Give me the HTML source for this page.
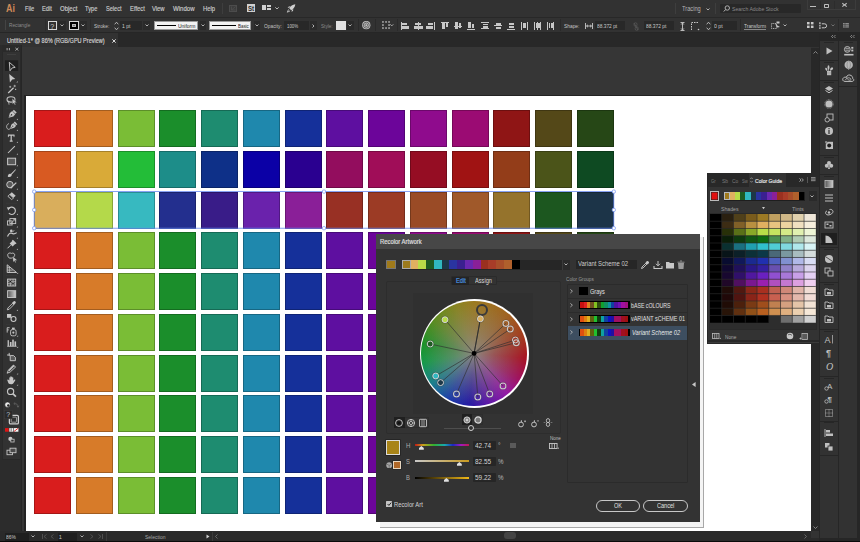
<!DOCTYPE html><html><head><meta charset="utf-8"><style>
html,body{margin:0;padding:0;}
body{width:860px;height:542px;overflow:hidden;position:relative;background:#323232;font-family:"Liberation Sans", sans-serif;}
.a{position:absolute;}
.t{white-space:nowrap;}
svg{overflow:visible;}
</style></head><body><div class="a" style="left:0px;top:0px;width:860px;height:17px;background:#323232;"></div><div class="a t" style="left:5.80px;top:2.76px;font-size:10.8px;line-height:10.8px;color:#d08a58;transform:scaleX(0.8241);transform-origin:0 0;font-weight:bold;">Ai</div><div class="a t" style="left:24.70px;top:6.20px;font-size:6.5px;line-height:6.5px;color:#cccccc;transform:scaleX(0.8696);transform-origin:0 0;-webkit-text-stroke:0.15px #cccccc;">File</div><div class="a t" style="left:41.70px;top:6.20px;font-size:6.5px;line-height:6.5px;color:#cccccc;transform:scaleX(0.8829);transform-origin:0 0;-webkit-text-stroke:0.15px #cccccc;">Edit</div><div class="a t" style="left:59.60px;top:6.20px;font-size:6.5px;line-height:6.5px;color:#cccccc;transform:scaleX(0.9263);transform-origin:0 0;-webkit-text-stroke:0.15px #cccccc;">Object</div><div class="a t" style="left:84.90px;top:6.20px;font-size:6.5px;line-height:6.5px;color:#cccccc;transform:scaleX(0.8720);transform-origin:0 0;-webkit-text-stroke:0.15px #cccccc;">Type</div><div class="a t" style="left:105.60px;top:6.20px;font-size:6.5px;line-height:6.5px;color:#cccccc;transform:scaleX(0.8633);transform-origin:0 0;-webkit-text-stroke:0.15px #cccccc;">Select</div><div class="a t" style="left:129.60px;top:6.20px;font-size:6.5px;line-height:6.5px;color:#cccccc;transform:scaleX(0.8964);transform-origin:0 0;-webkit-text-stroke:0.15px #cccccc;">Effect</div><div class="a t" style="left:152.30px;top:6.20px;font-size:6.5px;line-height:6.5px;color:#cccccc;transform:scaleX(0.9016);transform-origin:0 0;-webkit-text-stroke:0.15px #cccccc;">View</div><div class="a t" style="left:173.30px;top:6.20px;font-size:6.5px;line-height:6.5px;color:#cccccc;transform:scaleX(0.9334);transform-origin:0 0;-webkit-text-stroke:0.15px #cccccc;">Window</div><div class="a t" style="left:203.00px;top:6.20px;font-size:6.5px;line-height:6.5px;color:#cccccc;transform:scaleX(0.9059);transform-origin:0 0;-webkit-text-stroke:0.15px #cccccc;">Help</div><div class="a" style="left:222px;top:3px;width:1px;height:11px;background:#3e3e3e;"></div><div class="a" style="left:229.3px;top:4.7px;width:7.9px;height:7.4px;background:#3c3c3c;border:0.8px solid #4c4c4c;box-sizing:border-box;"></div><svg class="a" style="left:230.8px;top:6.2px;" width="5" height="4.5" viewBox="0 0 5 4.5"><path d="M0.5 4 L4.5 0.5 M0.5 0.5 V4 H4.5" stroke="#555" fill="none" stroke-width="0.6"/></svg><div class="a" style="left:247px;top:4.2px;width:7.9px;height:7.9px;background:#d0d0d0;"></div><div class="a t" style="left:247.90px;top:6.08px;font-size:6.4px;line-height:6.4px;color:#2a2a2a;transform:scaleX(0.9531);transform-origin:0 0;font-weight:bold;">St</div><div class="a" style="left:262.3px;top:5.1px;width:3.7px;height:5.1px;background:#d0d0d0;"></div><div class="a" style="left:267px;top:5.1px;width:4.2px;height:2.2px;background:#d0d0d0;"></div><div class="a" style="left:267px;top:8px;width:4.2px;height:2.2px;background:#d0d0d0;"></div><svg class="a" style="left:275px;top:6.5px;" width="4" height="2.5" viewBox="0 0 4 2.5"><path d="M0.3 0.3 L2 2 L3.7 0.3" stroke="#c8c8c8" fill="none" stroke-width="0.9"/></svg><svg class="a" style="left:287px;top:3.7px;" width="8.5" height="8.5" viewBox="0 0 8.5 8.5"><path d="M8.3 0.2 C5.5 0.5 3.6 2 2.2 4.3 L4.2 6.3 C6.5 4.9 8 3 8.3 0.2 Z" fill="#cfcfcf"/><path d="M2.6 3.6 L0.6 3.9 L1.8 2.4 L3.6 2.3 Z M4.9 5.9 L4.6 7.9 L6.1 6.7 L6.2 4.9 Z" fill="#cfcfcf"/><path d="M1.6 5.4 L0.3 8.2 L3.1 6.9" stroke="#cfcfcf" fill="none" stroke-width="0.8"/></svg><div class="a" style="left:675px;top:3px;width:1px;height:11px;background:#3e3e3e;"></div><div class="a t" style="left:681.50px;top:5.97px;font-size:6.3px;line-height:6.3px;color:#b4b4b4;transform:scaleX(0.9043);transform-origin:0 0;">Tracing</div><svg class="a" style="left:705.5px;top:7.5px;" width="4" height="3" viewBox="0 0 4 3"><path d="M0.5 0.5 L2 2 L3.5 0.5" stroke="#c0c0c0" fill="none" stroke-width="0.9"/></svg><div class="a" style="left:715.3px;top:3px;width:1px;height:11px;background:#3e3e3e;"></div><div class="a" style="left:720px;top:4px;width:81.4px;height:9px;background:#282828;border-radius:1px;"></div><svg class="a" style="left:723px;top:5px;" width="8" height="7" viewBox="0 0 8 7"><circle cx="4.3" cy="3" r="2.2" stroke="#bbb" fill="none" stroke-width="0.9"/><path d="M2.6 4.6 L0.8 6.5" stroke="#bbb" stroke-width="1"/></svg><div class="a t" style="left:732.30px;top:6.14px;font-size:6.1px;line-height:6.1px;color:#8a8a8a;transform:scaleX(0.8427);transform-origin:0 0;">Search Adobe Stock</div><div class="a" style="left:807px;top:0px;width:48.6px;height:9.5px;border:1px solid #3c3c3c;border-top:none;box-sizing:border-box;"></div><div class="a" style="left:810.2px;top:5.9px;width:5.4px;height:1.5px;background:#bdbdbd;"></div><div class="a" style="left:819.6px;top:0.5px;width:0.7px;height:8.5px;background:#2c2c2c;"></div><div class="a" style="left:833.6px;top:0.5px;width:0.7px;height:8.5px;background:#2c2c2c;"></div><div class="a" style="left:824px;top:3.5px;width:5.2px;height:4.4px;border:1.3px solid #bdbdbd;border-radius:0.8px;box-sizing:border-box;"></div><svg class="a" style="left:842px;top:3.3px;" width="5" height="3.8" viewBox="0 0 5 3.8"><path d="M0.3 0.2 L4.7 3.6 M4.7 0.2 L0.3 3.6" stroke="#bdbdbd" stroke-width="1.1"/></svg><div class="a" style="left:0px;top:16.6px;width:860px;height:16.6px;background:#323232;border-top:1px solid #282828;border-bottom:1px solid #262626;box-sizing:border-box;"></div><div class="a" style="left:5px;top:20px;width:0.8px;height:10px;background:#444;"></div><div class="a t" style="left:8.70px;top:22.24px;font-size:6.1px;line-height:6.1px;color:#8c8c8c;transform:scaleX(0.7751);transform-origin:0 0;">Rectangle</div><div class="a" style="left:45px;top:19px;width:1px;height:12px;background:#2c2c2c;"></div><div class="a" style="left:48px;top:20.5px;width:9.2px;height:9.5px;background:#323232;border:1px solid #d8d8d8;box-sizing:border-box;"></div><div class="a t" style="left:50.20px;top:23.07px;font-size:7px;line-height:7px;color:#d8d8d8;">?</div><div class="a" style="left:58.2px;top:20.5px;width:7.7px;height:9.5px;background:#2a2a2a;"></div><svg class="a" style="left:60.2px;top:24px;" width="4" height="3" viewBox="0 0 4 3"><path d="M0.5 0.5 L2 2 L3.5 0.5" stroke="#c0c0c0" fill="none" stroke-width="0.9"/></svg><div class="a" style="left:69px;top:20.5px;width:9.7px;height:9.5px;background:#000;border:1px solid #d8d8d8;box-sizing:border-box;"></div><div class="a" style="left:72.2px;top:23.5px;width:3.4px;height:3.4px;background:#777;border:0.6px solid #bbb;box-sizing:border-box;"></div><div class="a" style="left:79.5px;top:20.5px;width:7.5px;height:9.5px;background:#2a2a2a;"></div><svg class="a" style="left:81.2px;top:24px;" width="4" height="3" viewBox="0 0 4 3"><path d="M0.5 0.5 L2 2 L3.5 0.5" stroke="#c0c0c0" fill="none" stroke-width="0.9"/></svg><div class="a" style="left:89.5px;top:19px;width:1px;height:12px;background:#2c2c2c;"></div><div class="a t" style="left:93.60px;top:22.64px;font-size:6.1px;line-height:6.1px;color:#c4c4c4;transform:scaleX(0.7912);transform-origin:0 0;">Stroke:</div><svg class="a" style="left:113.5px;top:20.5px;" width="5" height="10" viewBox="0 0 5 10"><path d="M0.7 3.3 L2.5 1.2 L4.3 3.3 M0.7 6.7 L2.5 8.8 L4.3 6.7" stroke="#c0c0c0" fill="none" stroke-width="0.9"/></svg><div class="a" style="left:119.8px;top:21px;width:22px;height:9px;background:#282828;"></div><div class="a t" style="left:122.20px;top:22.64px;font-size:6.1px;line-height:6.1px;color:#c8c8c8;transform:scaleX(0.8246);transform-origin:0 0;">1 pt</div><div class="a" style="left:143px;top:21px;width:7px;height:9px;background:#2a2a2a;"></div><svg class="a" style="left:144.5px;top:24px;" width="4" height="3" viewBox="0 0 4 3"><path d="M0.5 0.5 L2 2 L3.5 0.5" stroke="#c0c0c0" fill="none" stroke-width="0.9"/></svg><div class="a" style="left:154px;top:20.5px;width:43.7px;height:9.3px;background:#f2f2f2;border:0.8px solid #999;box-sizing:border-box;"></div><div class="a" style="left:157px;top:24.8px;width:19px;height:1.3px;background:#000;"></div><div class="a t" style="left:178.00px;top:22.92px;font-size:6px;line-height:6px;color:#222;transform:scaleX(0.8286);transform-origin:0 0;">Uniform</div><div class="a" style="left:199.5px;top:21px;width:6.5px;height:9px;background:#2a2a2a;"></div><svg class="a" style="left:200.8px;top:24px;" width="4" height="3" viewBox="0 0 4 3"><path d="M0.5 0.5 L2 2 L3.5 0.5" stroke="#c0c0c0" fill="none" stroke-width="0.9"/></svg><div class="a" style="left:209.3px;top:20.5px;width:41.7px;height:9.3px;background:#f2f2f2;border:0.8px solid #999;box-sizing:border-box;"></div><div class="a" style="left:211.6px;top:24.8px;width:24.6px;height:1.3px;background:#000;"></div><div class="a t" style="left:238.20px;top:22.92px;font-size:6px;line-height:6px;color:#222;transform:scaleX(0.7362);transform-origin:0 0;">Basic</div><div class="a" style="left:253.5px;top:21px;width:6.5px;height:9px;background:#2a2a2a;"></div><svg class="a" style="left:254.8px;top:24px;" width="4" height="3" viewBox="0 0 4 3"><path d="M0.5 0.5 L2 2 L3.5 0.5" stroke="#c0c0c0" fill="none" stroke-width="0.9"/></svg><div class="a t" style="left:263.90px;top:22.64px;font-size:6.1px;line-height:6.1px;color:#c4c4c4;transform:scaleX(0.7951);transform-origin:0 0;">Opacity:</div><div class="a" style="left:284.4px;top:21px;width:24.4px;height:9px;background:#282828;"></div><div class="a t" style="left:286.60px;top:22.64px;font-size:6.1px;line-height:6.1px;color:#c8c8c8;transform:scaleX(0.7172);transform-origin:0 0;">100%</div><div class="a" style="left:310px;top:21px;width:7px;height:9px;background:#2a2a2a;"></div><svg class="a" style="left:312.3px;top:23.5px;" width="3" height="4" viewBox="0 0 3 4"><path d="M0.5 0.5 L2 2 L0.5 3.5" stroke="#c0c0c0" fill="none" stroke-width="0.9"/></svg><div class="a t" style="left:321.00px;top:22.64px;font-size:6.1px;line-height:6.1px;color:#8a8a8a;transform:scaleX(0.7607);transform-origin:0 0;">Style:</div><div class="a" style="left:335.6px;top:21px;width:10px;height:9.3px;background:#e2e2e2;"></div><div class="a" style="left:347px;top:21px;width:6.5px;height:9px;background:#2a2a2a;"></div><svg class="a" style="left:348.3px;top:24px;" width="4" height="3" viewBox="0 0 4 3"><path d="M0.5 0.5 L2 2 L3.5 0.5" stroke="#c0c0c0" fill="none" stroke-width="0.9"/></svg><div class="a" style="left:357.7px;top:19px;width:1px;height:12px;background:#2a2a2a;"></div><svg class="a" style="left:362.2px;top:20.8px;" width="8.6" height="8.4" viewBox="0 0 8.6 8.4"><circle cx="4.3" cy="4.2" r="4.1" fill="#c4c4c4"/><circle cx="4.3" cy="4.2" r="3" stroke="#4a4a4a" fill="none" stroke-width="0.8"/><circle cx="4.3" cy="4.2" r="1.4" stroke="#4a4a4a" fill="none" stroke-width="0.7"/></svg><div class="a" style="left:375px;top:19px;width:1px;height:12px;background:#2a2a2a;"></div><svg class="a" style="left:381.5px;top:20.8px;" width="8" height="8" viewBox="0 0 8 8"><rect x="0.2" y="0.2" width="1.5" height="1.5" fill="#c0c0c0"/><rect x="0.2" y="3.3" width="1.5" height="1.5" fill="#c0c0c0"/><rect x="0.2" y="6.3" width="1.5" height="1.5" fill="#c0c0c0"/><rect x="3.3" y="0.2" width="1.5" height="1.5" fill="#c0c0c0"/><rect x="3.3" y="6.3" width="1.5" height="1.5" fill="#c0c0c0"/><rect x="6.3" y="0.2" width="1.5" height="1.5" fill="#c0c0c0"/><rect x="6.3" y="3.3" width="1.5" height="1.5" fill="#c0c0c0"/><rect x="6.3" y="6.3" width="1.5" height="1.5" fill="#c0c0c0"/></svg><svg class="a" style="left:390.3px;top:24.2px;" width="3.6" height="2.6" viewBox="0 0 3.6 2.6"><path d="M0.3 0.3 L1.8 1.9 L3.3 0.3" stroke="#c0c0c0" fill="none" stroke-width="0.8"/></svg><div class="a" style="left:397px;top:19px;width:1px;height:12px;background:#2a2a2a;"></div><div class="a" style="left:400.7px;top:21.5px;width:1px;height:8px;background:#c8c8c8;"></div><div class="a" style="left:402.2px;top:22.5px;width:5px;height:2.5px;background:#c8c8c8;"></div><div class="a" style="left:402.2px;top:26px;width:7px;height:2.5px;background:#c8c8c8;"></div><div class="a" style="left:417.5px;top:21.5px;width:1px;height:8px;background:#c8c8c8;"></div><div class="a" style="left:415.0px;top:22.5px;width:6px;height:2.5px;background:#c8c8c8;"></div><div class="a" style="left:413.5px;top:26px;width:9px;height:2.5px;background:#c8c8c8;"></div><div class="a" style="left:434px;top:21.5px;width:1px;height:8px;background:#c8c8c8;"></div><div class="a" style="left:428px;top:22.5px;width:5px;height:2.5px;background:#c8c8c8;"></div><div class="a" style="left:426px;top:26px;width:7px;height:2.5px;background:#c8c8c8;"></div><div class="a" style="left:441.4px;top:21.5px;width:8px;height:1px;background:#c8c8c8;"></div><div class="a" style="left:442.4px;top:23px;width:2.5px;height:6px;background:#c8c8c8;"></div><div class="a" style="left:445.9px;top:23px;width:2.5px;height:4px;background:#c8c8c8;"></div><div class="a" style="left:454px;top:25.5px;width:8px;height:1px;background:#c8c8c8;"></div><div class="a" style="left:455px;top:22px;width:2.5px;height:7px;background:#c8c8c8;"></div><div class="a" style="left:458.5px;top:23px;width:2.5px;height:5px;background:#c8c8c8;"></div><div class="a" style="left:467px;top:28.5px;width:8px;height:1px;background:#c8c8c8;"></div><div class="a" style="left:468px;top:22px;width:2.5px;height:6px;background:#c8c8c8;"></div><div class="a" style="left:471.5px;top:24px;width:2.5px;height:4px;background:#c8c8c8;"></div><div class="a" style="left:481px;top:22px;width:8px;height:1px;background:#c8c8c8;"></div><div class="a" style="left:481px;top:28px;width:8px;height:1px;background:#c8c8c8;"></div><div class="a" style="left:482.5px;top:23.5px;width:5px;height:1.5px;background:#c8c8c8;"></div><div class="a" style="left:482.5px;top:26px;width:5px;height:1.5px;background:#c8c8c8;"></div><div class="a" style="left:494px;top:25px;width:8px;height:1px;background:#c8c8c8;"></div><div class="a" style="left:495.5px;top:22.5px;width:5px;height:2px;background:#c8c8c8;"></div><div class="a" style="left:495.5px;top:26.5px;width:5px;height:2px;background:#c8c8c8;"></div><div class="a" style="left:507px;top:28.5px;width:8px;height:1px;background:#c8c8c8;"></div><div class="a" style="left:508.5px;top:22.5px;width:5px;height:2px;background:#c8c8c8;"></div><div class="a" style="left:508.5px;top:25.5px;width:5px;height:2px;background:#c8c8c8;"></div><div class="a" style="left:521px;top:21.5px;width:1px;height:8px;background:#c8c8c8;"></div><div class="a" style="left:527px;top:21.5px;width:1px;height:8px;background:#c8c8c8;"></div><div class="a" style="left:522.5px;top:23px;width:2px;height:5px;background:#c8c8c8;"></div><div class="a" style="left:524.8px;top:23px;width:1.5px;height:5px;background:#c8c8c8;"></div><div class="a" style="left:537px;top:21.5px;width:1px;height:8px;background:#c8c8c8;"></div><div class="a" style="left:534px;top:21.5px;width:1px;height:8px;background:#c8c8c8;"></div><div class="a" style="left:540px;top:21.5px;width:1px;height:8px;background:#c8c8c8;"></div><div class="a" style="left:535.5px;top:23px;width:1.5px;height:5px;background:#c8c8c8;"></div><div class="a" style="left:538px;top:23px;width:1.5px;height:5px;background:#c8c8c8;"></div><div class="a" style="left:547px;top:21.5px;width:1px;height:8px;background:#c8c8c8;"></div><div class="a" style="left:553px;top:21.5px;width:1px;height:8px;background:#c8c8c8;"></div><div class="a" style="left:548.5px;top:23px;width:1.5px;height:5px;background:#c8c8c8;"></div><div class="a" style="left:550.5px;top:23px;width:2px;height:5px;background:#c8c8c8;"></div><div class="a" style="left:560px;top:19px;width:1px;height:12px;background:#2a2a2a;"></div><div class="a t" style="left:564.00px;top:22.64px;font-size:6.1px;line-height:6.1px;color:#c4c4c4;transform:scaleX(0.7964);transform-origin:0 0;">Shape:</div><svg class="a" style="left:585px;top:22.5px;" width="8" height="6" viewBox="0 0 8 6"><path d="M0.5 0 V6 M7.5 0 V6 M1.5 3 H6.5 M1.5 3 L3 1.8 M1.5 3 L3 4.2 M6.5 3 L5 1.8 M6.5 3 L5 4.2" stroke="#c8c8c8" fill="none" stroke-width="0.9"/></svg><div class="a" style="left:595px;top:21px;width:29.6px;height:9px;background:#282828;"></div><div class="a t" style="left:596.90px;top:22.64px;font-size:6.1px;line-height:6.1px;color:#c8c8c8;transform:scaleX(0.7941);transform-origin:0 0;">88.372 pt</div><svg class="a" style="left:633px;top:21.5px;" width="6" height="9" viewBox="0 0 6 9"><path d="M1 1 L5 8" stroke="#555" stroke-width="1"/><rect x="1" y="0.8" width="3" height="3.5" rx="1.4" stroke="#555" fill="none" stroke-width="0.8"/><rect x="2.2" y="4.8" width="3" height="3.5" rx="1.4" stroke="#555" fill="none" stroke-width="0.8"/></svg><div class="a" style="left:643.8px;top:21px;width:30.7px;height:9px;background:#282828;"></div><div class="a t" style="left:645.70px;top:22.64px;font-size:6.1px;line-height:6.1px;color:#c8c8c8;transform:scaleX(0.7981);transform-origin:0 0;">88.372 pt</div><svg class="a" style="left:679.5px;top:21.5px;" width="5" height="9" viewBox="0 0 5 9"><path d="M0.5 0.5 H4.5 M0.5 8.5 H4.5 M2.5 1 V8 M1.2 2.5 L2.5 1 L3.8 2.5 M1.2 6.5 L2.5 8 L3.8 6.5" stroke="#c8c8c8" fill="none" stroke-width="0.9"/></svg><svg class="a" style="left:691px;top:21.5px;" width="9" height="9" viewBox="0 0 9 9"><path d="M0.5 8 V0.5 H7" stroke="#c8c8c8" fill="none" stroke-width="1" stroke-dasharray="1.5 1"/><circle cx="7.5" cy="7.5" r="0.8" fill="#c8c8c8"/></svg><svg class="a" style="left:705.5px;top:20.5px;" width="5" height="10" viewBox="0 0 5 10"><path d="M0.7 3.3 L2.5 1.2 L4.3 3.3 M0.7 6.7 L2.5 8.8 L4.3 6.7" stroke="#c0c0c0" fill="none" stroke-width="0.9"/></svg><div class="a" style="left:712.3px;top:21px;width:24.4px;height:9px;background:#282828;"></div><div class="a t" style="left:714.40px;top:22.64px;font-size:6.1px;line-height:6.1px;color:#c8c8c8;transform:scaleX(0.8442);transform-origin:0 0;">0 pt</div><div class="a" style="left:740px;top:19px;width:1px;height:12px;background:#2a2a2a;"></div><div class="a t" style="left:744.00px;top:22.64px;font-size:6.1px;line-height:6.1px;color:#c8c8c8;transform:scaleX(0.7979);transform-origin:0 0;">Transform</div><div class="a" style="left:744px;top:28.6px;width:22px;height:0.6px;background:#8a8a8a;"></div><svg class="a" style="left:770.5px;top:21px;" width="10" height="9" viewBox="0 0 10 9"><rect x="0.5" y="2.5" width="5" height="5" stroke="#c8c8c8" fill="none" stroke-width="0.9" stroke-dasharray="1 0.8"/><path d="M4 3 L9 6 L6.5 6.5 L8 9 L4 3Z" fill="#c8c8c8"/><rect x="5.5" y="0.5" width="3" height="2" fill="#c8c8c8"/></svg><svg class="a" style="left:782.7px;top:24px;" width="4" height="3" viewBox="0 0 4 3"><path d="M0.5 0.5 L2 2 L3.5 0.5" stroke="#c0c0c0" fill="none" stroke-width="0.9"/></svg><svg class="a" style="left:807px;top:22px;" width="7" height="6" viewBox="0 0 7 6"><rect x="0" y="0" width="2.6" height="2.4" fill="#c8c8c8"/><rect x="3.9" y="0" width="2.6" height="2.4" fill="#c8c8c8"/><rect x="0" y="3.6" width="2.6" height="2.4" fill="#c8c8c8"/><rect x="3.9" y="3.6" width="2.6" height="2.4" fill="#c8c8c8"/></svg><svg class="a" style="left:819px;top:21.5px;" width="9" height="8" viewBox="0 0 9 8"><path d="M0.9 0.3 V7.7" stroke="#c8c8c8" stroke-width="1.3" stroke-dasharray="1.6 0.9"/><path d="M2.8 1.8 H5.6 A2 2 0 0 1 5.6 5.8 H2.8" stroke="#c8c8c8" fill="none" stroke-width="1"/></svg><svg class="a" style="left:830.5px;top:24px;" width="4" height="3" viewBox="0 0 4 3"><path d="M0.5 0.5 L2 2 L3.5 0.5" stroke="#777" fill="none" stroke-width="0.9"/></svg><div class="a" style="left:838px;top:19px;width:1px;height:12px;background:#2a2a2a;"></div><svg class="a" style="left:843.1px;top:22.7px;" width="6" height="4.6" viewBox="0 0 6 4.6"><rect x="0" y="0" width="5.9" height="4.6" fill="#8e8e8e"/><path d="M0 1.5 H5.9 M0 3.1 H5.9 M2 0 V4.6" stroke="#323232" stroke-width="0.5"/></svg><div class="a" style="left:0px;top:33.2px;width:860px;height:14.1px;background:#282828;"></div><div class="a" style="left:0px;top:33.2px;width:118px;height:14.3px;background:#323232;"></div><div class="a t" style="left:6.70px;top:38.47px;font-size:6.3px;line-height:6.3px;color:#d4d4d4;transform:scaleX(0.8796);transform-origin:0 0;-webkit-text-stroke:0.15px #d4d4d4;">Untitled-1* @ 86% (RGB/GPU Preview)</div><svg class="a" style="left:111.5px;top:38.8px;" width="4" height="4" viewBox="0 0 4 4"><path d="M0.3 0.3 L3.7 3.7 M3.7 0.3 L0.3 3.7" stroke="#d8d8d8" stroke-width="1"/></svg><div class="a" style="left:22px;top:47.3px;width:789px;height:484.2px;background:#363636;"></div><div class="a" style="left:24px;top:94.5px;width:787px;height:437px;background:#232323;"></div><div class="a" style="left:26px;top:96px;width:785px;height:435.5px;background:#ffffff;"></div><div class="a" style="left:34.0px;top:110.0px;width:37px;height:37px;background:#d91d1d;box-sizing:border-box;border:1px solid rgba(0,0,0,0.24);"></div><div class="a" style="left:75.77px;top:110.0px;width:37px;height:37px;background:#d77b29;box-sizing:border-box;border:1px solid rgba(0,0,0,0.24);"></div><div class="a" style="left:117.54px;top:110.0px;width:37px;height:37px;background:#7abd36;box-sizing:border-box;border:1px solid rgba(0,0,0,0.24);"></div><div class="a" style="left:159.31px;top:110.0px;width:37px;height:37px;background:#1b8e2b;box-sizing:border-box;border:1px solid rgba(0,0,0,0.24);"></div><div class="a" style="left:201.08px;top:110.0px;width:37px;height:37px;background:#1e8c70;box-sizing:border-box;border:1px solid rgba(0,0,0,0.24);"></div><div class="a" style="left:242.85px;top:110.0px;width:37px;height:37px;background:#1f88ad;box-sizing:border-box;border:1px solid rgba(0,0,0,0.24);"></div><div class="a" style="left:284.62px;top:110.0px;width:37px;height:37px;background:#15309a;box-sizing:border-box;border:1px solid rgba(0,0,0,0.24);"></div><div class="a" style="left:326.39px;top:110.0px;width:37px;height:37px;background:#5e0fa0;box-sizing:border-box;border:1px solid rgba(0,0,0,0.24);"></div><div class="a" style="left:368.16px;top:110.0px;width:37px;height:37px;background:#6c059a;box-sizing:border-box;border:1px solid rgba(0,0,0,0.24);"></div><div class="a" style="left:409.93px;top:110.0px;width:37px;height:37px;background:#8f0b8d;box-sizing:border-box;border:1px solid rgba(0,0,0,0.24);"></div><div class="a" style="left:451.7px;top:110.0px;width:37px;height:37px;background:#9b0b73;box-sizing:border-box;border:1px solid rgba(0,0,0,0.24);"></div><div class="a" style="left:493.47px;top:110.0px;width:37px;height:37px;background:#8f1515;box-sizing:border-box;border:1px solid rgba(0,0,0,0.24);"></div><div class="a" style="left:535.24px;top:110.0px;width:37px;height:37px;background:#544818;box-sizing:border-box;border:1px solid rgba(0,0,0,0.24);"></div><div class="a" style="left:577.01px;top:110.0px;width:37px;height:37px;background:#264716;box-sizing:border-box;border:1px solid rgba(0,0,0,0.24);"></div><div class="a" style="left:34.0px;top:150.78px;width:37px;height:37px;background:#d85a22;box-sizing:border-box;border:1px solid rgba(0,0,0,0.24);"></div><div class="a" style="left:75.77px;top:150.78px;width:37px;height:37px;background:#d9aa38;box-sizing:border-box;border:1px solid rgba(0,0,0,0.24);"></div><div class="a" style="left:117.54px;top:150.78px;width:37px;height:37px;background:#23bd38;box-sizing:border-box;border:1px solid rgba(0,0,0,0.24);"></div><div class="a" style="left:159.31px;top:150.78px;width:37px;height:37px;background:#1d8d89;box-sizing:border-box;border:1px solid rgba(0,0,0,0.24);"></div><div class="a" style="left:201.08px;top:150.78px;width:37px;height:37px;background:#0e3088;box-sizing:border-box;border:1px solid rgba(0,0,0,0.24);"></div><div class="a" style="left:242.85px;top:150.78px;width:37px;height:37px;background:#0b00a6;box-sizing:border-box;border:1px solid rgba(0,0,0,0.24);"></div><div class="a" style="left:284.62px;top:150.78px;width:37px;height:37px;background:#2a0090;box-sizing:border-box;border:1px solid rgba(0,0,0,0.24);"></div><div class="a" style="left:326.39px;top:150.78px;width:37px;height:37px;background:#930d5e;box-sizing:border-box;border:1px solid rgba(0,0,0,0.24);"></div><div class="a" style="left:368.16px;top:150.78px;width:37px;height:37px;background:#a00d58;box-sizing:border-box;border:1px solid rgba(0,0,0,0.24);"></div><div class="a" style="left:409.93px;top:150.78px;width:37px;height:37px;background:#950d23;box-sizing:border-box;border:1px solid rgba(0,0,0,0.24);"></div><div class="a" style="left:451.7px;top:150.78px;width:37px;height:37px;background:#a01313;box-sizing:border-box;border:1px solid rgba(0,0,0,0.24);"></div><div class="a" style="left:493.47px;top:150.78px;width:37px;height:37px;background:#933d19;box-sizing:border-box;border:1px solid rgba(0,0,0,0.24);"></div><div class="a" style="left:535.24px;top:150.78px;width:37px;height:37px;background:#4b5419;box-sizing:border-box;border:1px solid rgba(0,0,0,0.24);"></div><div class="a" style="left:577.01px;top:150.78px;width:37px;height:37px;background:#0e4a22;box-sizing:border-box;border:1px solid rgba(0,0,0,0.24);"></div><div class="a" style="left:34.0px;top:191.56px;width:37px;height:37px;background:#d9ae5c;box-sizing:border-box;border:1px solid rgba(0,0,0,0.24);"></div><div class="a" style="left:75.77px;top:191.56px;width:37px;height:37px;background:#b4d94a;box-sizing:border-box;border:1px solid rgba(0,0,0,0.24);"></div><div class="a" style="left:117.54px;top:191.56px;width:37px;height:37px;background:#37b9c0;box-sizing:border-box;border:1px solid rgba(0,0,0,0.24);"></div><div class="a" style="left:159.31px;top:191.56px;width:37px;height:37px;background:#232f8e;box-sizing:border-box;border:1px solid rgba(0,0,0,0.24);"></div><div class="a" style="left:201.08px;top:191.56px;width:37px;height:37px;background:#391c88;box-sizing:border-box;border:1px solid rgba(0,0,0,0.24);"></div><div class="a" style="left:242.85px;top:191.56px;width:37px;height:37px;background:#6a22ac;box-sizing:border-box;border:1px solid rgba(0,0,0,0.24);"></div><div class="a" style="left:284.62px;top:191.56px;width:37px;height:37px;background:#8a1f98;box-sizing:border-box;border:1px solid rgba(0,0,0,0.24);"></div><div class="a" style="left:326.39px;top:191.56px;width:37px;height:37px;background:#983024;box-sizing:border-box;border:1px solid rgba(0,0,0,0.24);"></div><div class="a" style="left:368.16px;top:191.56px;width:37px;height:37px;background:#9c3b25;box-sizing:border-box;border:1px solid rgba(0,0,0,0.24);"></div><div class="a" style="left:409.93px;top:191.56px;width:37px;height:37px;background:#9a4b26;box-sizing:border-box;border:1px solid rgba(0,0,0,0.24);"></div><div class="a" style="left:451.7px;top:191.56px;width:37px;height:37px;background:#a0592a;box-sizing:border-box;border:1px solid rgba(0,0,0,0.24);"></div><div class="a" style="left:493.47px;top:191.56px;width:37px;height:37px;background:#95732c;box-sizing:border-box;border:1px solid rgba(0,0,0,0.24);"></div><div class="a" style="left:535.24px;top:191.56px;width:37px;height:37px;background:#1c571f;box-sizing:border-box;border:1px solid rgba(0,0,0,0.24);"></div><div class="a" style="left:577.01px;top:191.56px;width:37px;height:37px;background:#1c3448;box-sizing:border-box;border:1px solid rgba(0,0,0,0.24);"></div><div class="a" style="left:34.0px;top:232.34px;width:37px;height:37px;background:#d91d1d;box-sizing:border-box;border:1px solid rgba(0,0,0,0.24);"></div><div class="a" style="left:75.77px;top:232.34px;width:37px;height:37px;background:#d77b29;box-sizing:border-box;border:1px solid rgba(0,0,0,0.24);"></div><div class="a" style="left:117.54px;top:232.34px;width:37px;height:37px;background:#7abd36;box-sizing:border-box;border:1px solid rgba(0,0,0,0.24);"></div><div class="a" style="left:159.31px;top:232.34px;width:37px;height:37px;background:#1b8e2b;box-sizing:border-box;border:1px solid rgba(0,0,0,0.24);"></div><div class="a" style="left:201.08px;top:232.34px;width:37px;height:37px;background:#1e8c70;box-sizing:border-box;border:1px solid rgba(0,0,0,0.24);"></div><div class="a" style="left:242.85px;top:232.34px;width:37px;height:37px;background:#1f88ad;box-sizing:border-box;border:1px solid rgba(0,0,0,0.24);"></div><div class="a" style="left:284.62px;top:232.34px;width:37px;height:37px;background:#15309a;box-sizing:border-box;border:1px solid rgba(0,0,0,0.24);"></div><div class="a" style="left:326.39px;top:232.34px;width:37px;height:37px;background:#5e0fa0;box-sizing:border-box;border:1px solid rgba(0,0,0,0.24);"></div><div class="a" style="left:368.16px;top:232.34px;width:37px;height:37px;background:#6c059a;box-sizing:border-box;border:1px solid rgba(0,0,0,0.24);"></div><div class="a" style="left:409.93px;top:232.34px;width:37px;height:37px;background:#8f0b8d;box-sizing:border-box;border:1px solid rgba(0,0,0,0.24);"></div><div class="a" style="left:451.7px;top:232.34px;width:37px;height:37px;background:#9b0b73;box-sizing:border-box;border:1px solid rgba(0,0,0,0.24);"></div><div class="a" style="left:493.47px;top:232.34px;width:37px;height:37px;background:#8f1515;box-sizing:border-box;border:1px solid rgba(0,0,0,0.24);"></div><div class="a" style="left:535.24px;top:232.34px;width:37px;height:37px;background:#544818;box-sizing:border-box;border:1px solid rgba(0,0,0,0.24);"></div><div class="a" style="left:577.01px;top:232.34px;width:37px;height:37px;background:#264716;box-sizing:border-box;border:1px solid rgba(0,0,0,0.24);"></div><div class="a" style="left:34.0px;top:273.12px;width:37px;height:37px;background:#d91d1d;box-sizing:border-box;border:1px solid rgba(0,0,0,0.24);"></div><div class="a" style="left:75.77px;top:273.12px;width:37px;height:37px;background:#d77b29;box-sizing:border-box;border:1px solid rgba(0,0,0,0.24);"></div><div class="a" style="left:117.54px;top:273.12px;width:37px;height:37px;background:#7abd36;box-sizing:border-box;border:1px solid rgba(0,0,0,0.24);"></div><div class="a" style="left:159.31px;top:273.12px;width:37px;height:37px;background:#1b8e2b;box-sizing:border-box;border:1px solid rgba(0,0,0,0.24);"></div><div class="a" style="left:201.08px;top:273.12px;width:37px;height:37px;background:#1e8c70;box-sizing:border-box;border:1px solid rgba(0,0,0,0.24);"></div><div class="a" style="left:242.85px;top:273.12px;width:37px;height:37px;background:#1f88ad;box-sizing:border-box;border:1px solid rgba(0,0,0,0.24);"></div><div class="a" style="left:284.62px;top:273.12px;width:37px;height:37px;background:#15309a;box-sizing:border-box;border:1px solid rgba(0,0,0,0.24);"></div><div class="a" style="left:326.39px;top:273.12px;width:37px;height:37px;background:#5e0fa0;box-sizing:border-box;border:1px solid rgba(0,0,0,0.24);"></div><div class="a" style="left:368.16px;top:273.12px;width:37px;height:37px;background:#6c059a;box-sizing:border-box;border:1px solid rgba(0,0,0,0.24);"></div><div class="a" style="left:409.93px;top:273.12px;width:37px;height:37px;background:#8f0b8d;box-sizing:border-box;border:1px solid rgba(0,0,0,0.24);"></div><div class="a" style="left:451.7px;top:273.12px;width:37px;height:37px;background:#9b0b73;box-sizing:border-box;border:1px solid rgba(0,0,0,0.24);"></div><div class="a" style="left:493.47px;top:273.12px;width:37px;height:37px;background:#8f1515;box-sizing:border-box;border:1px solid rgba(0,0,0,0.24);"></div><div class="a" style="left:535.24px;top:273.12px;width:37px;height:37px;background:#544818;box-sizing:border-box;border:1px solid rgba(0,0,0,0.24);"></div><div class="a" style="left:577.01px;top:273.12px;width:37px;height:37px;background:#264716;box-sizing:border-box;border:1px solid rgba(0,0,0,0.24);"></div><div class="a" style="left:34.0px;top:313.9px;width:37px;height:37px;background:#d91d1d;box-sizing:border-box;border:1px solid rgba(0,0,0,0.24);"></div><div class="a" style="left:75.77px;top:313.9px;width:37px;height:37px;background:#d77b29;box-sizing:border-box;border:1px solid rgba(0,0,0,0.24);"></div><div class="a" style="left:117.54px;top:313.9px;width:37px;height:37px;background:#7abd36;box-sizing:border-box;border:1px solid rgba(0,0,0,0.24);"></div><div class="a" style="left:159.31px;top:313.9px;width:37px;height:37px;background:#1b8e2b;box-sizing:border-box;border:1px solid rgba(0,0,0,0.24);"></div><div class="a" style="left:201.08px;top:313.9px;width:37px;height:37px;background:#1e8c70;box-sizing:border-box;border:1px solid rgba(0,0,0,0.24);"></div><div class="a" style="left:242.85px;top:313.9px;width:37px;height:37px;background:#1f88ad;box-sizing:border-box;border:1px solid rgba(0,0,0,0.24);"></div><div class="a" style="left:284.62px;top:313.9px;width:37px;height:37px;background:#15309a;box-sizing:border-box;border:1px solid rgba(0,0,0,0.24);"></div><div class="a" style="left:326.39px;top:313.9px;width:37px;height:37px;background:#5e0fa0;box-sizing:border-box;border:1px solid rgba(0,0,0,0.24);"></div><div class="a" style="left:368.16px;top:313.9px;width:37px;height:37px;background:#6c059a;box-sizing:border-box;border:1px solid rgba(0,0,0,0.24);"></div><div class="a" style="left:409.93px;top:313.9px;width:37px;height:37px;background:#8f0b8d;box-sizing:border-box;border:1px solid rgba(0,0,0,0.24);"></div><div class="a" style="left:451.7px;top:313.9px;width:37px;height:37px;background:#9b0b73;box-sizing:border-box;border:1px solid rgba(0,0,0,0.24);"></div><div class="a" style="left:493.47px;top:313.9px;width:37px;height:37px;background:#8f1515;box-sizing:border-box;border:1px solid rgba(0,0,0,0.24);"></div><div class="a" style="left:535.24px;top:313.9px;width:37px;height:37px;background:#544818;box-sizing:border-box;border:1px solid rgba(0,0,0,0.24);"></div><div class="a" style="left:577.01px;top:313.9px;width:37px;height:37px;background:#264716;box-sizing:border-box;border:1px solid rgba(0,0,0,0.24);"></div><div class="a" style="left:34.0px;top:354.68px;width:37px;height:37px;background:#d91d1d;box-sizing:border-box;border:1px solid rgba(0,0,0,0.24);"></div><div class="a" style="left:75.77px;top:354.68px;width:37px;height:37px;background:#d77b29;box-sizing:border-box;border:1px solid rgba(0,0,0,0.24);"></div><div class="a" style="left:117.54px;top:354.68px;width:37px;height:37px;background:#7abd36;box-sizing:border-box;border:1px solid rgba(0,0,0,0.24);"></div><div class="a" style="left:159.31px;top:354.68px;width:37px;height:37px;background:#1b8e2b;box-sizing:border-box;border:1px solid rgba(0,0,0,0.24);"></div><div class="a" style="left:201.08px;top:354.68px;width:37px;height:37px;background:#1e8c70;box-sizing:border-box;border:1px solid rgba(0,0,0,0.24);"></div><div class="a" style="left:242.85px;top:354.68px;width:37px;height:37px;background:#1f88ad;box-sizing:border-box;border:1px solid rgba(0,0,0,0.24);"></div><div class="a" style="left:284.62px;top:354.68px;width:37px;height:37px;background:#15309a;box-sizing:border-box;border:1px solid rgba(0,0,0,0.24);"></div><div class="a" style="left:326.39px;top:354.68px;width:37px;height:37px;background:#5e0fa0;box-sizing:border-box;border:1px solid rgba(0,0,0,0.24);"></div><div class="a" style="left:368.16px;top:354.68px;width:37px;height:37px;background:#6c059a;box-sizing:border-box;border:1px solid rgba(0,0,0,0.24);"></div><div class="a" style="left:409.93px;top:354.68px;width:37px;height:37px;background:#8f0b8d;box-sizing:border-box;border:1px solid rgba(0,0,0,0.24);"></div><div class="a" style="left:451.7px;top:354.68px;width:37px;height:37px;background:#9b0b73;box-sizing:border-box;border:1px solid rgba(0,0,0,0.24);"></div><div class="a" style="left:493.47px;top:354.68px;width:37px;height:37px;background:#8f1515;box-sizing:border-box;border:1px solid rgba(0,0,0,0.24);"></div><div class="a" style="left:535.24px;top:354.68px;width:37px;height:37px;background:#544818;box-sizing:border-box;border:1px solid rgba(0,0,0,0.24);"></div><div class="a" style="left:577.01px;top:354.68px;width:37px;height:37px;background:#264716;box-sizing:border-box;border:1px solid rgba(0,0,0,0.24);"></div><div class="a" style="left:34.0px;top:395.46px;width:37px;height:37px;background:#d91d1d;box-sizing:border-box;border:1px solid rgba(0,0,0,0.24);"></div><div class="a" style="left:75.77px;top:395.46px;width:37px;height:37px;background:#d77b29;box-sizing:border-box;border:1px solid rgba(0,0,0,0.24);"></div><div class="a" style="left:117.54px;top:395.46px;width:37px;height:37px;background:#7abd36;box-sizing:border-box;border:1px solid rgba(0,0,0,0.24);"></div><div class="a" style="left:159.31px;top:395.46px;width:37px;height:37px;background:#1b8e2b;box-sizing:border-box;border:1px solid rgba(0,0,0,0.24);"></div><div class="a" style="left:201.08px;top:395.46px;width:37px;height:37px;background:#1e8c70;box-sizing:border-box;border:1px solid rgba(0,0,0,0.24);"></div><div class="a" style="left:242.85px;top:395.46px;width:37px;height:37px;background:#1f88ad;box-sizing:border-box;border:1px solid rgba(0,0,0,0.24);"></div><div class="a" style="left:284.62px;top:395.46px;width:37px;height:37px;background:#15309a;box-sizing:border-box;border:1px solid rgba(0,0,0,0.24);"></div><div class="a" style="left:326.39px;top:395.46px;width:37px;height:37px;background:#5e0fa0;box-sizing:border-box;border:1px solid rgba(0,0,0,0.24);"></div><div class="a" style="left:368.16px;top:395.46px;width:37px;height:37px;background:#6c059a;box-sizing:border-box;border:1px solid rgba(0,0,0,0.24);"></div><div class="a" style="left:409.93px;top:395.46px;width:37px;height:37px;background:#8f0b8d;box-sizing:border-box;border:1px solid rgba(0,0,0,0.24);"></div><div class="a" style="left:451.7px;top:395.46px;width:37px;height:37px;background:#9b0b73;box-sizing:border-box;border:1px solid rgba(0,0,0,0.24);"></div><div class="a" style="left:493.47px;top:395.46px;width:37px;height:37px;background:#8f1515;box-sizing:border-box;border:1px solid rgba(0,0,0,0.24);"></div><div class="a" style="left:535.24px;top:395.46px;width:37px;height:37px;background:#544818;box-sizing:border-box;border:1px solid rgba(0,0,0,0.24);"></div><div class="a" style="left:577.01px;top:395.46px;width:37px;height:37px;background:#264716;box-sizing:border-box;border:1px solid rgba(0,0,0,0.24);"></div><div class="a" style="left:34.0px;top:436.24px;width:37px;height:37px;background:#d91d1d;box-sizing:border-box;border:1px solid rgba(0,0,0,0.24);"></div><div class="a" style="left:75.77px;top:436.24px;width:37px;height:37px;background:#d77b29;box-sizing:border-box;border:1px solid rgba(0,0,0,0.24);"></div><div class="a" style="left:117.54px;top:436.24px;width:37px;height:37px;background:#7abd36;box-sizing:border-box;border:1px solid rgba(0,0,0,0.24);"></div><div class="a" style="left:159.31px;top:436.24px;width:37px;height:37px;background:#1b8e2b;box-sizing:border-box;border:1px solid rgba(0,0,0,0.24);"></div><div class="a" style="left:201.08px;top:436.24px;width:37px;height:37px;background:#1e8c70;box-sizing:border-box;border:1px solid rgba(0,0,0,0.24);"></div><div class="a" style="left:242.85px;top:436.24px;width:37px;height:37px;background:#1f88ad;box-sizing:border-box;border:1px solid rgba(0,0,0,0.24);"></div><div class="a" style="left:284.62px;top:436.24px;width:37px;height:37px;background:#15309a;box-sizing:border-box;border:1px solid rgba(0,0,0,0.24);"></div><div class="a" style="left:326.39px;top:436.24px;width:37px;height:37px;background:#5e0fa0;box-sizing:border-box;border:1px solid rgba(0,0,0,0.24);"></div><div class="a" style="left:368.16px;top:436.24px;width:37px;height:37px;background:#6c059a;box-sizing:border-box;border:1px solid rgba(0,0,0,0.24);"></div><div class="a" style="left:409.93px;top:436.24px;width:37px;height:37px;background:#8f0b8d;box-sizing:border-box;border:1px solid rgba(0,0,0,0.24);"></div><div class="a" style="left:451.7px;top:436.24px;width:37px;height:37px;background:#9b0b73;box-sizing:border-box;border:1px solid rgba(0,0,0,0.24);"></div><div class="a" style="left:493.47px;top:436.24px;width:37px;height:37px;background:#8f1515;box-sizing:border-box;border:1px solid rgba(0,0,0,0.24);"></div><div class="a" style="left:535.24px;top:436.24px;width:37px;height:37px;background:#544818;box-sizing:border-box;border:1px solid rgba(0,0,0,0.24);"></div><div class="a" style="left:577.01px;top:436.24px;width:37px;height:37px;background:#264716;box-sizing:border-box;border:1px solid rgba(0,0,0,0.24);"></div><div class="a" style="left:34.0px;top:477.02px;width:37px;height:37px;background:#d91d1d;box-sizing:border-box;border:1px solid rgba(0,0,0,0.24);"></div><div class="a" style="left:75.77px;top:477.02px;width:37px;height:37px;background:#d77b29;box-sizing:border-box;border:1px solid rgba(0,0,0,0.24);"></div><div class="a" style="left:117.54px;top:477.02px;width:37px;height:37px;background:#7abd36;box-sizing:border-box;border:1px solid rgba(0,0,0,0.24);"></div><div class="a" style="left:159.31px;top:477.02px;width:37px;height:37px;background:#1b8e2b;box-sizing:border-box;border:1px solid rgba(0,0,0,0.24);"></div><div class="a" style="left:201.08px;top:477.02px;width:37px;height:37px;background:#1e8c70;box-sizing:border-box;border:1px solid rgba(0,0,0,0.24);"></div><div class="a" style="left:242.85px;top:477.02px;width:37px;height:37px;background:#1f88ad;box-sizing:border-box;border:1px solid rgba(0,0,0,0.24);"></div><div class="a" style="left:284.62px;top:477.02px;width:37px;height:37px;background:#15309a;box-sizing:border-box;border:1px solid rgba(0,0,0,0.24);"></div><div class="a" style="left:326.39px;top:477.02px;width:37px;height:37px;background:#5e0fa0;box-sizing:border-box;border:1px solid rgba(0,0,0,0.24);"></div><div class="a" style="left:368.16px;top:477.02px;width:37px;height:37px;background:#6c059a;box-sizing:border-box;border:1px solid rgba(0,0,0,0.24);"></div><div class="a" style="left:409.93px;top:477.02px;width:37px;height:37px;background:#8f0b8d;box-sizing:border-box;border:1px solid rgba(0,0,0,0.24);"></div><div class="a" style="left:451.7px;top:477.02px;width:37px;height:37px;background:#9b0b73;box-sizing:border-box;border:1px solid rgba(0,0,0,0.24);"></div><div class="a" style="left:493.47px;top:477.02px;width:37px;height:37px;background:#8f1515;box-sizing:border-box;border:1px solid rgba(0,0,0,0.24);"></div><div class="a" style="left:535.24px;top:477.02px;width:37px;height:37px;background:#544818;box-sizing:border-box;border:1px solid rgba(0,0,0,0.24);"></div><div class="a" style="left:577.01px;top:477.02px;width:37px;height:37px;background:#264716;box-sizing:border-box;border:1px solid rgba(0,0,0,0.24);"></div><svg class="a" style="left:0px;top:0px;left:0;top:0;pointer-events:none;" width="860" height="542" viewBox="0 0 860 542"><rect x="34.2" y="191.6" width="579.6" height="36.6" stroke="#6a8cf2" stroke-width="0.8" fill="none"/><rect x="32.6" y="190.0" width="3.2" height="3.2" rx="1.2" fill="#fff" stroke="#6a8cf2" stroke-width="0.7"/><rect x="322.4" y="190.0" width="3.2" height="3.2" rx="1.2" fill="#fff" stroke="#6a8cf2" stroke-width="0.7"/><rect x="612.1999999999999" y="190.0" width="3.2" height="3.2" rx="1.2" fill="#fff" stroke="#6a8cf2" stroke-width="0.7"/><rect x="32.6" y="208.3" width="3.2" height="3.2" rx="1.2" fill="#fff" stroke="#6a8cf2" stroke-width="0.7"/><rect x="612.1999999999999" y="208.3" width="3.2" height="3.2" rx="1.2" fill="#fff" stroke="#6a8cf2" stroke-width="0.7"/><rect x="32.6" y="226.6" width="3.2" height="3.2" rx="1.2" fill="#fff" stroke="#6a8cf2" stroke-width="0.7"/><rect x="322.4" y="226.6" width="3.2" height="3.2" rx="1.2" fill="#fff" stroke="#6a8cf2" stroke-width="0.7"/><rect x="612.1999999999999" y="226.6" width="3.2" height="3.2" rx="1.2" fill="#fff" stroke="#6a8cf2" stroke-width="0.7"/></svg><div class="a" style="left:0px;top:45px;width:22px;height:486.5px;background:#2c2c2c;"></div><div class="a" style="left:2.3px;top:45px;width:18.6px;height:414.5px;background:#323232;border:1px solid #292929;border-top:none;box-sizing:border-box;"></div><div class="a" style="left:2.3px;top:45px;width:18.6px;height:6.5px;background:#2a2a2a;"></div><div class="a" style="left:20.6px;top:45px;width:1.3px;height:486.5px;background:#262626;"></div><svg class="a" style="left:0px;top:0px;left:0;top:0;" width="22" height="460" viewBox="0 0 22 460"><rect x="6.6" y="48" width="1" height="2.3" fill="#a8a8a8"/><rect x="8.9" y="48" width="1" height="2.3" fill="#a8a8a8"/><path d="M15.4 47.9 L18.4 50.5 M18.4 47.9 L15.4 50.5" stroke="#b0b0b0" stroke-width="0.9"/><rect x="7" y="54" width="9" height="0.7" fill="#444"/><rect x="5" y="60.3" width="13.2" height="10.6" fill="#1f1f1f"/><path d="M9.3 62.3 L15.2 67.4 L12.2 67.9 L10 70.8 Z" stroke="#c6c6c6" stroke-width="0.95" fill="none" stroke-linejoin="round"/><path d="M9.2 73.9 L15.3 79.1 L12.2 79.6 L9.9 82.6 Z" fill="#c6c6c6"/><path d="M17.8 80.9 V82.4 H16.3 Z" fill="#a8a8a8"/><path d="M8.2 93 L13.6 87.7" stroke="#c6c6c6" stroke-width="1.2"/><path d="M10.2 85.8 V87.8 M9.2 86.8 H11.2 M14.7 84.8 V87.2 M13.5 86 H15.9 M15.6 88.8 V90 M15 89.4 H16.2" stroke="#c6c6c6" stroke-width="0.7"/><ellipse cx="11" cy="99.4" rx="4" ry="2.7" stroke="#c6c6c6" fill="none" stroke-width="1.05"/><path d="M8.6 101.6 C8 103 9.5 103.6 9 104.6" stroke="#c6c6c6" fill="none" stroke-width="0.8"/><path d="M12.2 98.6 L16.8 102.4 L14.6 102.6 L15.7 104.5 L14.9 104.9 L13.8 103 L12.5 104.3 Z" fill="#c6c6c6" stroke="#323232" stroke-width="0.3"/><rect x="6" y="107.8" width="11" height="0.7" fill="#3a3a3a"/><g transform="translate(11.6 114.8) rotate(45)"><rect x="-2" y="-5.2" width="4" height="1.8" fill="#c6c6c6"/><path d="M-2.2 -3 H2.2 L2.4 0 L0 4.3 L-2.4 0 Z" fill="#c6c6c6"/><circle cx="0" cy="0" r="0.65" fill="#323232"/><path d="M0 0.6 V3.6" stroke="#323232" stroke-width="0.45"/></g><path d="M18.0 118.6 V120.1 H16.5 Z" fill="#a8a8a8"/><g transform="translate(12.8 126.2) rotate(45) scale(0.9)"><rect x="-2" y="-5.2" width="4" height="1.8" fill="#c6c6c6"/><path d="M-2.2 -3 H2.2 L2.4 0 L0 4.3 L-2.4 0 Z" fill="#c6c6c6"/><circle cx="0" cy="0" r="0.65" fill="#323232"/><path d="M0 0.6 V3.6" stroke="#323232" stroke-width="0.45"/></g><path d="M9 123.6 C6.3 124.2 5.8 128 8 129.2 C9 129.7 10 129.3 9.8 128.5" stroke="#c6c6c6" fill="none" stroke-width="0.8"/><path d="M18.0 129.5 V131.0 H16.5 Z" fill="#a8a8a8"/><path d="M8 135.2 H14.4 M11.2 135.2 V141.3 M9.7 141.2 H12.7" stroke="#c6c6c6" stroke-width="1.25" fill="none"/><path d="M8.4 135 V137.1 M14 135 V137.1" stroke="#c6c6c6" stroke-width="0.8"/><path d="M18.0 141.6 V143.1 H16.5 Z" fill="#a8a8a8"/><path d="M8 153 L14.9 146.1" stroke="#c6c6c6" stroke-width="1.05"/><path d="M18.0 153.2 V154.7 H16.5 Z" fill="#a8a8a8"/><rect x="7.6" y="158.2" width="8" height="6.5" stroke="#c6c6c6" fill="#5a5a5a" stroke-width="1"/><path d="M18.0 164.8 V166.3 H16.5 Z" fill="#a8a8a8"/><path d="M7.8 176.8 C7.8 174.6 9.3 173.4 10.7 174 L15.5 169.2 L16 169.7 L11.6 174.8 C12.1 176.2 10.4 177.5 7.8 176.8 Z" fill="#c6c6c6"/><path d="M18.0 176.5 V178.0 H16.5 Z" fill="#a8a8a8"/><circle cx="9.9" cy="184.6" r="3.2" stroke="#c6c6c6" fill="#5a5a5a" stroke-width="1"/><path d="M10.6 188.2 L16.3 182.6" stroke="#c6c6c6" stroke-width="1.3"/><path d="M18.0 188.3 V189.8 H16.5 Z" fill="#a8a8a8"/><path d="M7.6 196.3 L11.8 192.2 L15.7 195.7 L11.6 199.6 Z" fill="#c6c6c6"/><path d="M7.9 196.3 L9.7 194.6 L13.6 198.1 L11.6 199.6 Z" fill="#3a3a3a" stroke="#c6c6c6" stroke-width="0.7"/><path d="M18.0 199.4 V200.9 H16.5 Z" fill="#a8a8a8"/><rect x="6" y="202.8" width="11" height="0.7" fill="#3a3a3a"/><path d="M8.7 208.6 A3.7 3.7 0 1 1 8.9 213.2" stroke="#c6c6c6" fill="none" stroke-width="1.15"/><path d="M6.8 207.2 L10 207.6 L8.4 210.4 Z" fill="#c6c6c6"/><path d="M18.0 213.6 V215.1 H16.5 Z" fill="#a8a8a8"/><rect x="7.5" y="220.9" width="4.6" height="4.1" stroke="#c6c6c6" fill="none" stroke-width="0.9"/><rect x="9.9" y="218.6" width="5.8" height="5" stroke="#c6c6c6" fill="none" stroke-width="0.9"/><path d="M11 223.3 L15.3 219.1 M13 219.1 H15.3 V221.3" stroke="#c6c6c6" fill="none" stroke-width="0.85"/><path d="M18.0 226 V227.5 H16.5 Z" fill="#a8a8a8"/><path d="M7.5 236.6 C8.7 233.8 10 232.5 11.6 233.3 C13 234 14.3 234.6 16.7 232.6" stroke="#c6c6c6" fill="none" stroke-width="1.2"/><circle cx="11.3" cy="230.9" r="1.3" fill="#c6c6c6"/><path d="M12.5 232.2 L14.2 230.2" stroke="#c6c6c6" stroke-width="0.8"/><path d="M18.0 237.2 V238.7 H16.5 Z" fill="#a8a8a8"/><path d="M7.5 248.3 L10.6 245.2" stroke="#c6c6c6" stroke-width="1"/><path d="M9.6 243.6 L12.8 240.6 L15.6 243.4 L12.6 246.6 Z" fill="#c6c6c6"/><path d="M12.4 240.2 L16 243.8" stroke="#c6c6c6" stroke-width="1.4"/><path d="M18.0 248.5 V250.0 H16.5 Z" fill="#a8a8a8"/><path d="M8 256.2 C6.8 253.4 9.6 252.4 11.4 253.4 C13 252.6 15.2 253.4 14.6 255.6 C14.2 257.4 12 258.4 10 258.1 C8.6 257.9 8.2 257.2 8 256.2 Z" stroke="#c6c6c6" fill="none" stroke-width="0.95"/><path d="M12.8 256.4 L17.3 260.3 L15.1 260.5 L16.2 262.3 L15.4 262.7 L14.4 260.9 L13.1 262.1 Z" fill="#c6c6c6" stroke="#323232" stroke-width="0.3"/><path d="M7.2 264.8 V272.5 H16.6 Z" stroke="#c6c6c6" fill="#4e4e4e" stroke-width="0.95"/><path d="M7.2 267.6 H10 M7.2 270.1 H12.8 M9.6 266.8 V272.5" stroke="#c6c6c6" stroke-width="0.7"/><path d="M18.1 272.4 V273.9 H16.6 Z" fill="#a8a8a8"/><rect x="6" y="275.1" width="11" height="0.7" fill="#3a3a3a"/><rect x="7.6" y="279.1" width="8.1" height="6.9" stroke="#c6c6c6" fill="#4e4e4e" stroke-width="0.95"/><path d="M7.6 281.4 C10 281 12 282.2 15.7 281.6 M7.6 283.7 C10 283.3 12 284.5 15.7 283.9 M10.3 279.1 C10 281.5 10.8 283.5 10.4 286 M13 279.1 C12.7 281.5 13.5 283.5 13.1 286" stroke="#c6c6c6" fill="none" stroke-width="0.7"/><circle cx="10.3" cy="281.5" r="0.8" fill="#111"/><circle cx="13" cy="283.8" r="0.8" fill="#111"/><defs><linearGradient id="tgr" x1="0" x2="1"><stop offset="0" stop-color="#555"/><stop offset="1" stop-color="#cfcfcf"/></linearGradient></defs><rect x="7.6" y="290.7" width="8.1" height="6.8" stroke="#c6c6c6" fill="url(#tgr)" stroke-width="0.95"/><path d="M7.3 309.8 L7.9 308 L12.4 303.5 L13.7 304.8 L9.2 309.3 Z" stroke="#c6c6c6" fill="none" stroke-width="0.9"/><path d="M11.9 303 L13.8 301.2 C14.8 300.6 16.3 302 15.7 303.1 L13.9 305 Z" fill="#c6c6c6"/><path d="M18.0 309.4 V310.9 H16.5 Z" fill="#a8a8a8"/><rect x="7" y="314" width="4.3" height="3.8" fill="#c6c6c6"/><circle cx="13.5" cy="319" r="2.5" stroke="#c6c6c6" fill="#323232" stroke-width="1.1"/><rect x="6" y="324.4" width="11" height="0.7" fill="#3a3a3a"/><path d="M7.2 332.6 V327.7 H9.6 M7.2 329.9 H8.8" stroke="#c6c6c6" fill="none" stroke-width="0.9"/><rect x="10.6" y="329.6" width="5.5" height="6.2" rx="1.6" stroke="#c6c6c6" fill="none" stroke-width="0.9"/><rect x="12" y="327.6" width="2.7" height="1.6" fill="#c6c6c6"/><circle cx="13.35" cy="332.6" r="1.1" fill="#c6c6c6"/><path d="M18.1 335.2 V336.7 H16.6 Z" fill="#a8a8a8"/><path d="M7.2 346.3 H16.6" stroke="#c6c6c6" stroke-width="0.8"/><rect x="7.6" y="340.2" width="1.3" height="6.1" fill="#c6c6c6"/><rect x="9.9" y="342" width="1.6" height="4.3" fill="#c6c6c6"/><rect x="12.2" y="339.6" width="1.6" height="6.7" fill="#c6c6c6"/><rect x="14.5" y="341.4" width="1.6" height="4.9" fill="#c6c6c6"/><path d="M18.1 346.6 V348.1 H16.6 Z" fill="#a8a8a8"/><path d="M7 355 H10.2 M9.2 352.9 V356" stroke="#c6c6c6" fill="none" stroke-width="0.95"/><path d="M10.2 355.6 H13.6 L15.4 357.4 V360.7 H10.2 Z" stroke="#c6c6c6" fill="#5a5a5a" stroke-width="0.95"/><path d="M7.1 373.2 L8.4 370.2 L13.4 365.1 L15.6 367 L10.2 372 Z" stroke="#c6c6c6" fill="none" stroke-width="0.95"/><path d="M8.4 370.2 L13.4 365.1 L14.5 366 L9.5 371.2 Z" fill="#c6c6c6"/><path d="M18.1 373 V374.5 H16.6 Z" fill="#a8a8a8"/><path d="M9.3 380.5 V377.8 C9.3 377 10.3 377 10.3 377.8 V379.8 V376.8 C10.3 376 11.3 376 11.3 376.8 V379.8 V377 C11.3 376.2 12.3 376.2 12.3 377 V379.8 V377.8 C12.3 377 13.3 377 13.3 377.8 V380.8 L14.2 379.8 C14.8 379.2 15.6 379.8 15.2 380.5 L13.4 383.2 C12.9 384 12 384.3 11 384.3 C9.3 384.3 8.3 383.3 8 382 L7.3 380.2 C7.1 379.5 8 379.2 8.4 379.8 Z" fill="#c6c6c6"/><path d="M18.1 384.2 V385.7 H16.6 Z" fill="#a8a8a8"/><circle cx="10.6" cy="391.4" r="3.1" stroke="#c6c6c6" fill="none" stroke-width="1.15"/><path d="M12.8 393.7 L15.9 396.6" stroke="#c6c6c6" stroke-width="1.7"/><circle cx="7.5" cy="404.7" r="2.7" fill="#eaeaea" stroke="#111" stroke-width="0.5"/><circle cx="8.3" cy="405.5" r="1.2" fill="#222"/><path d="M14.5 403.6 C16.8 403.6 18 404.6 18 406.8 M13.8 403.6 L15.2 402.5 M13.8 403.6 L15.2 404.7 M17 405.8 L18 407.3 L19 405.8" stroke="#6a6a6a" fill="none" stroke-width="0.7"/><rect x="9.4" y="415.4" width="9" height="8.5" rx="1.2" stroke="#cfcfcf" fill="#262626" stroke-width="1.3"/><rect x="11.2" y="417.1" width="5.4" height="5.1" rx="0.5" stroke="#bdbdbd" fill="#323232" stroke-width="0.8"/><rect x="4.6" y="410.6" width="7.6" height="8.2" fill="#2a2a2a" stroke="#3e3e3e" stroke-width="0.5"/><text x="6.2" y="417.3" font-size="7" font-family="Liberation Sans" fill="#b8c4d0">?</text><rect x="5" y="428.1" width="3.7" height="3.6" fill="#e01414"/><rect x="9.3" y="428.1" width="3.7" height="3.6" fill="#f0f0f0"/><rect x="10.6" y="428.1" width="1.2" height="3.6" fill="#888"/><rect x="13.6" y="428.1" width="4.8" height="3.6" fill="#fafafa"/><path d="M13.8 431.6 L18.2 428.2" stroke="#e01414" stroke-width="0.9"/><circle cx="10.4" cy="438.9" r="2.1" fill="#c6c6c6"/><rect x="10.8" y="439.2" width="3.3" height="2.8" fill="#323232" stroke="#c6c6c6" stroke-width="0.8"/><rect x="7" y="450.2" width="5.5" height="4.5" stroke="#c6c6c6" fill="#323232" stroke-width="0.9"/><rect x="10" y="448.2" width="6" height="4.5" stroke="#c6c6c6" fill="#4a4a4a" stroke-width="0.9"/></svg><div class="a" style="left:811px;top:47.5px;width:8px;height:484px;background:#282828;"></div><svg class="a" style="left:812.6px;top:50.5px;" width="5" height="3" viewBox="0 0 5 3"><path d="M0.5 2.5 L2.5 0.5 L4.5 2.5" stroke="#999" fill="none" stroke-width="0.8"/></svg><svg class="a" style="left:812.8px;top:525.8px;" width="5" height="3" viewBox="0 0 5 3"><path d="M0.5 0.5 L2.5 2.5 L4.5 0.5" stroke="#999" fill="none" stroke-width="0.8"/></svg><div class="a" style="left:0px;top:531.3px;width:819px;height:10px;background:#2a2a2a;"></div><div class="a" style="left:0px;top:541px;width:860px;height:1px;background:#0a0a0a;"></div><div class="a" style="left:4.6px;top:532.5px;width:24px;height:8px;background:#1f1f1f;"></div><div class="a t" style="left:5.90px;top:533.55px;font-size:6.2px;line-height:6.2px;color:#c8c8c8;transform:scaleX(0.7903);transform-origin:0 0;">86%</div><svg class="a" style="left:31px;top:535.2px;" width="4" height="3" viewBox="0 0 4 3"><path d="M0.5 0.5 L2 2 L3.5 0.5" stroke="#c0c0c0" fill="none" stroke-width="0.9"/></svg><svg class="a" style="left:42px;top:533.8px;" width="5" height="5" viewBox="0 0 5 5"><path d="M0.5 0 V5 M4.5 0.5 L2 2.5 L4.5 4.5" stroke="#5a5a5a" fill="none" stroke-width="0.8"/></svg><svg class="a" style="left:50px;top:533.8px;" width="4" height="5" viewBox="0 0 4 5"><path d="M3.5 0.5 L1 2.5 L3.5 4.5" stroke="#5a5a5a" fill="none" stroke-width="0.8"/></svg><div class="a" style="left:57.6px;top:532.5px;width:19px;height:8px;background:#1f1f1f;"></div><div class="a t" style="left:58.80px;top:534.66px;font-size:5.6px;line-height:5.6px;color:#c0c0c0;">1</div><svg class="a" style="left:79.6px;top:535.2px;" width="4" height="3" viewBox="0 0 4 3"><path d="M0.5 0.5 L2 2 L3.5 0.5" stroke="#c0c0c0" fill="none" stroke-width="0.9"/></svg><svg class="a" style="left:90px;top:533.8px;" width="4" height="5" viewBox="0 0 4 5"><path d="M0.5 0.5 L3 2.5 L0.5 4.5" stroke="#5a5a5a" fill="none" stroke-width="0.8"/></svg><svg class="a" style="left:97.5px;top:533.8px;" width="5" height="5" viewBox="0 0 5 5"><path d="M0.5 0.5 L3 2.5 L0.5 4.5 M4.5 0 V5" stroke="#5a5a5a" fill="none" stroke-width="0.8"/></svg><div class="a" style="left:106px;top:532px;width:0.8px;height:9px;background:#3a3a3a;"></div><div class="a t" style="left:144.50px;top:533.95px;font-size:6.2px;line-height:6.2px;color:#a8a8a8;transform:scaleX(0.8035);transform-origin:0 0;">Selection</div><svg class="a" style="left:206px;top:533.8px;" width="4" height="5" viewBox="0 0 4 5"><path d="M0.5 0.5 L3.5 2.5 L0.5 4.5 Z" fill="#d0d0d0"/></svg><div class="a" style="left:212px;top:532px;width:0.8px;height:9px;background:#3a3a3a;"></div><svg class="a" style="left:215px;top:533.8px;" width="3" height="5" viewBox="0 0 3 5"><path d="M2.5 0.5 L0.5 2.5 L2.5 4.5" stroke="#777" fill="none" stroke-width="0.8"/></svg><div class="a" style="left:504.4px;top:532.4px;width:11.6px;height:6.9px;background:#444;border-radius:3px;"></div><svg class="a" style="left:803.5px;top:533.8px;" width="3" height="5" viewBox="0 0 3 5"><path d="M0.5 0.5 L2.5 2.5 L0.5 4.5" stroke="#777" fill="none" stroke-width="0.8"/></svg><div class="a" style="left:811px;top:531.4px;width:7.7px;height:7px;background:#333333;"></div><div class="a" style="left:0px;top:541px;width:860px;height:1px;background:#0a0a0a;"></div><div class="a" style="left:819px;top:33.2px;width:41px;height:508px;background:#262626;"></div><div class="a" style="left:819.9px;top:40px;width:17.8px;height:498.4px;background:#323232;"></div><div class="a" style="left:839px;top:40px;width:18px;height:498.4px;background:#323232;"></div><svg class="a" style="left:830.5px;top:35px;" width="5" height="3" viewBox="0 0 5 3"><path d="M2 0 L0.5 1.5 L2 3 M4.5 0 L3 1.5 L4.5 3" stroke="#aaa" fill="none" stroke-width="0.7"/></svg><svg class="a" style="left:850px;top:35px;" width="5" height="3" viewBox="0 0 5 3"><path d="M2 0 L0.5 1.5 L2 3 M4.5 0 L3 1.5 L4.5 3" stroke="#aaa" fill="none" stroke-width="0.7"/></svg><div class="a" style="left:819.6px;top:40px;width:18.4px;height:1px;background:#262626;"></div><div class="a" style="left:824.3px;top:41.6px;width:9.4px;height:0.8px;background:#262626;"></div><div class="a" style="left:819.6px;top:60px;width:18.4px;height:1px;background:#262626;"></div><div class="a" style="left:824.3px;top:61.6px;width:9.4px;height:0.8px;background:#262626;"></div><div class="a" style="left:819.6px;top:80px;width:18.4px;height:1px;background:#262626;"></div><div class="a" style="left:824.3px;top:81.6px;width:9.4px;height:0.8px;background:#262626;"></div><div class="a" style="left:819.6px;top:155px;width:18.4px;height:1px;background:#262626;"></div><div class="a" style="left:824.3px;top:156.6px;width:9.4px;height:0.8px;background:#262626;"></div><div class="a" style="left:819.6px;top:174px;width:18.4px;height:1px;background:#262626;"></div><div class="a" style="left:824.3px;top:175.6px;width:9.4px;height:0.8px;background:#262626;"></div><div class="a" style="left:819.6px;top:247px;width:18.4px;height:1px;background:#262626;"></div><div class="a" style="left:824.3px;top:248.6px;width:9.4px;height:0.8px;background:#262626;"></div><div class="a" style="left:819.6px;top:282.4px;width:18.4px;height:1px;background:#262626;"></div><div class="a" style="left:824.3px;top:284.0px;width:9.4px;height:0.8px;background:#262626;"></div><div class="a" style="left:819.6px;top:329.4px;width:18.4px;height:1px;background:#262626;"></div><div class="a" style="left:824.3px;top:331.0px;width:9.4px;height:0.8px;background:#262626;"></div><div class="a" style="left:819.6px;top:376.4px;width:18.4px;height:1px;background:#262626;"></div><div class="a" style="left:824.3px;top:378.0px;width:9.4px;height:0.8px;background:#262626;"></div><div class="a" style="left:819.6px;top:420.5px;width:18.4px;height:1px;background:#262626;"></div><div class="a" style="left:824.3px;top:422.1px;width:9.4px;height:0.8px;background:#262626;"></div><div class="a" style="left:819.6px;top:455px;width:18.4px;height:1px;background:#262626;"></div><div class="a" style="left:839.3px;top:40px;width:20.7px;height:1px;background:#262626;"></div><div class="a" style="left:843.7px;top:41.6px;width:9.4px;height:0.8px;background:#262626;"></div><div class="a" style="left:839px;top:85.9px;width:18px;height:1px;background:#262626;"></div><svg class="a" style="left:823.8px;top:46.0px;" width="10" height="10" viewBox="0 0 10 10"><path d="M2.5 1.5 L8.5 5 L2.5 8.5 Z" fill="#c0c0c0"/></svg><svg class="a" style="left:824px;top:64px;" width="10" height="12" viewBox="0 0 10 12"><rect x="3" y="7" width="4.2" height="4.2" fill="#c0c0c0"/><path d="M3 8.4 H7.2 M3 9.8 H7.2" stroke="#8a8a8a" stroke-width="0.4"/><ellipse cx="4.5" cy="3.5" rx="0.95" ry="2.3" fill="#c0c0c0"/><ellipse cx="2.3" cy="5.2" rx="0.9" ry="1.6" transform="rotate(-25 2.3 5.2)" fill="#c0c0c0"/><ellipse cx="7.6" cy="4.8" rx="1.2" ry="1.7" transform="rotate(50 7.6 4.8)" fill="#c0c0c0"/><path d="M4.5 5 V7 M2.8 6.3 L3.5 7 M6.8 5.8 L6 7" stroke="#c0c0c0" stroke-width="0.6"/></svg><svg class="a" style="left:823.8px;top:85.0px;" width="10" height="10" viewBox="0 0 10 10"><path d="M5 1 L9 3.5 L5 6 L1 3.5 Z" fill="#c0c0c0"/><path d="M1.5 5.5 L5 7.8 L8.5 5.5" stroke="#c0c0c0" fill="none" stroke-width="1"/></svg><svg class="a" style="left:823.8px;top:99.0px;" width="10" height="10" viewBox="0 0 10 10"><circle cx="5" cy="5" r="3.6" fill="#c0c0c0"/><circle cx="5" cy="5" r="4.4" stroke="#c0c0c0" fill="none" stroke-width="0.6" stroke-dasharray="0.8 0.8"/></svg><svg class="a" style="left:823.8px;top:113.0px;" width="10" height="10" viewBox="0 0 10 10"><rect x="3" y="1" width="6" height="6" stroke="#c0c0c0" fill="none" stroke-width="0.9"/><circle cx="3.2" cy="6.8" r="2.2" stroke="#c0c0c0" fill="#303030" stroke-width="0.9"/></svg><svg class="a" style="left:823.8px;top:126.4px;" width="10" height="10" viewBox="0 0 10 10"><circle cx="5" cy="5" r="4" fill="#c0c0c0"/><rect x="4.4" y="2" width="1.2" height="1.2" fill="#303030"/><rect x="4.4" y="4" width="1.2" height="4" fill="#303030"/></svg><svg class="a" style="left:825px;top:140.5px;" width="8.5" height="8.5" viewBox="0 0 8.5 8.5"><rect x="0.8" y="0.8" width="7.2" height="7.2" fill="#c0c0c0"/><circle cx="4.2" cy="4.6" r="2" fill="#1e1e1e"/><rect x="0" y="0" width="2.2" height="2.2" fill="#323232"/><rect x="0.3" y="0.3" width="1.5" height="1.5" fill="#c0c0c0"/></svg><svg class="a" style="left:823.8px;top:159.5px;" width="10" height="10" viewBox="0 0 10 10"><circle cx="5" cy="3" r="2" fill="#c0c0c0"/><circle cx="2.8" cy="5.8" r="2" fill="#c0c0c0"/><circle cx="7.2" cy="5.8" r="2" fill="#c0c0c0"/><path d="M5 5 L4 9 H6 Z" fill="#c0c0c0"/></svg><svg class="a" style="left:823.8px;top:179.0px;" width="10" height="10" viewBox="0 0 10 10"><defs><linearGradient id="dg" x1="0" x2="1"><stop offset="0" stop-color="#555"/><stop offset="1" stop-color="#ccc"/></linearGradient></defs><rect x="1" y="1.5" width="8" height="7" fill="url(#dg)" stroke="#c0c0c0" stroke-width="0.8"/></svg><svg class="a" style="left:823.8px;top:192.7px;" width="10" height="10" viewBox="0 0 10 10"><path d="M1 2 H9 M1 5 H9 M1 8 H9" stroke="#c0c0c0" stroke-width="1"/></svg><svg class="a" style="left:823.8px;top:206.5px;" width="10" height="10" viewBox="0 0 10 10"><path d="M3 4 C1 4 1 8 4 8 C7 8 9 6 9 4.5 C9 3 7 2 5.5 2.5" stroke="#c0c0c0" fill="none" stroke-width="1"/><circle cx="5" cy="5.5" r="1.2" fill="#c0c0c0"/></svg><svg class="a" style="left:823.8px;top:220.3px;" width="10" height="10" viewBox="0 0 10 10"><rect x="1" y="2" width="8" height="6" stroke="#c0c0c0" fill="none" stroke-width="0.9"/><rect x="2.5" y="3.5" width="2" height="1.5" fill="#c0c0c0"/><rect x="5.5" y="5" width="2" height="1.5" fill="#c0c0c0"/></svg><div class="a" style="left:820.5px;top:233px;width:16.5px;height:11.5px;background:#1f1f1f;"></div><svg class="a" style="left:823.8px;top:233.6px;" width="10" height="10" viewBox="0 0 10 10"><path d="M1.5 9 V1.5 C5 1.5 8.5 5 8.5 9 Z" fill="#c0c0c0"/></svg><svg class="a" style="left:823.8px;top:253.5px;" width="10" height="10" viewBox="0 0 10 10"><circle cx="5" cy="5" r="4" fill="#c0c0c0"/><path d="M2 3 L8 7" stroke="#303030" stroke-width="0.8"/></svg><svg class="a" style="left:823.8px;top:267.3px;" width="10" height="10" viewBox="0 0 10 10"><rect x="1" y="1" width="5" height="5" stroke="#c0c0c0" fill="none" stroke-width="0.9"/><rect x="4" y="4" width="5" height="5" stroke="#c0c0c0" fill="#303030" stroke-width="0.9"/></svg><svg class="a" style="left:823.8px;top:286.5px;" width="10" height="10" viewBox="0 0 10 10"><path d="M1 2 H4 L5 3 H9 V8.5 H1 Z" stroke="#c0c0c0" fill="none" stroke-width="0.9"/><rect x="3" y="5" width="4" height="2.5" fill="#c0c0c0"/></svg><svg class="a" style="left:823.8px;top:300.4px;" width="10" height="10" viewBox="0 0 10 10"><path d="M1 2 H4 L5 3 H9 V8.5 H1 Z" stroke="#c0c0c0" fill="none" stroke-width="0.9"/><rect x="3" y="5" width="4" height="2.5" fill="#c0c0c0"/></svg><svg class="a" style="left:823.8px;top:314.2px;" width="10" height="10" viewBox="0 0 10 10"><path d="M1 2 H4 L5 3 H9 V8.5 H1 Z" stroke="#c0c0c0" fill="none" stroke-width="0.9"/><rect x="3" y="5" width="4" height="2.5" fill="#c0c0c0"/></svg><svg class="a" style="left:823.8px;top:333.5px;" width="10" height="10" viewBox="0 0 10 10"><text x="0.5" y="8.5" font-size="9" font-family="Liberation Sans" fill="#c0c0c0">A</text><path d="M8.5 1 V9.5" stroke="#c0c0c0" stroke-width="0.7"/></svg><svg class="a" style="left:823.8px;top:347.3px;" width="10" height="10" viewBox="0 0 10 10"><text x="2" y="8.5" font-size="9" font-family="Liberation Sans" font-weight="bold" fill="#c0c0c0">¶</text></svg><svg class="a" style="left:823.8px;top:361.0px;" width="10" height="10" viewBox="0 0 10 10"><text x="2" y="8.8" font-size="10" font-family="Liberation Serif" font-style="italic" fill="#c0c0c0">O</text></svg><svg class="a" style="left:823.8px;top:381.0px;" width="10" height="10" viewBox="0 0 10 10"><text x="3" y="7.5" font-size="8" font-family="Liberation Sans" fill="#c0c0c0">A</text><circle cx="2.5" cy="7.5" r="1.7" stroke="#c0c0c0" fill="#303030" stroke-width="0.8"/></svg><svg class="a" style="left:823.8px;top:394.3px;" width="10" height="10" viewBox="0 0 10 10"><text x="3.5" y="7.5" font-size="8" font-family="Liberation Sans" font-weight="bold" fill="#c0c0c0">¶</text><circle cx="2.5" cy="7.5" r="1.7" stroke="#c0c0c0" fill="#303030" stroke-width="0.8"/></svg><svg class="a" style="left:823.8px;top:408.0px;" width="10" height="10" viewBox="0 0 10 10"><rect x="1.5" y="1.5" width="7" height="7" stroke="#c0c0c0" fill="none" stroke-width="0.9" stroke-dasharray="1 1"/><path d="M1.5 5 H8.5 M5 1.5 V8.5" stroke="#c0c0c0" stroke-width="0.7" stroke-dasharray="1 1"/></svg><svg class="a" style="left:823.8px;top:427.8px;" width="10" height="10" viewBox="0 0 10 10"><path d="M1 1 V9" stroke="#c0c0c0" stroke-width="0.9"/><rect x="2" y="2" width="4" height="2.5" fill="#c0c0c0"/><rect x="2" y="5.5" width="7" height="2.5" fill="#c0c0c0"/></svg><svg class="a" style="left:823.8px;top:442.2px;" width="10" height="10" viewBox="0 0 10 10"><rect x="1" y="1" width="4.5" height="4.5" fill="#c0c0c0"/><rect x="4" y="4" width="5" height="5" fill="#c0c0c0" stroke="#303030" stroke-width="0.8"/></svg><svg class="a" style="left:843.5px;top:45.6px;" width="10" height="10" viewBox="0 0 10 10"><circle cx="3.3" cy="3.4" r="2.9" stroke="#c0c0c0" fill="#4a4a4a" stroke-width="0.9"/><path d="M1.5 2.5 H5 M1.5 4.3 H5" stroke="#c0c0c0" stroke-width="0.6"/><rect x="7.3" y="0.9" width="2" height="1.8" fill="#c0c0c0"/><rect x="7.3" y="3.6" width="2" height="1.8" fill="#c0c0c0"/><rect x="0.2" y="7.9" width="9.3" height="1.6" fill="#c0c0c0"/></svg><svg class="a" style="left:843.7px;top:60px;" width="10" height="10" viewBox="0 0 10 10"><circle cx="4.7" cy="4.9" r="4.2" fill="#b8b8b8"/><path d="M4.7 0.7 C2.5 2.5 2.5 7.3 4.7 9.1 M4.7 0.7 C6.9 2.5 6.9 7.3 4.7 9.1" stroke="#7a7a7a" fill="none" stroke-width="0.6"/><path d="M4.7 9.1 V9.9" stroke="#c0c0c0" stroke-width="0.8"/></svg><svg class="a" style="left:842.4px;top:73.8px;" width="12.5" height="8" viewBox="0 0 12.5 8"><path d="M3 7.4 C0.8 7.4 0.3 5.6 1 4.4 C1.8 3 3.4 3 4.2 3.4 C5 1 7.5 0.3 9.3 1.6 C10.6 2.5 10.8 3.8 10.6 4.4 C12.2 4.9 12.2 7.4 10 7.4 Z" stroke="#c0c0c0" fill="none" stroke-width="1"/><path d="M3.4 6 C4.5 4 6.5 3 8.5 4.5 C9.5 5.3 8.8 6.5 7.5 6.2 C6 5.8 5 4.8 4.2 3.4" stroke="#c0c0c0" fill="none" stroke-width="0.8"/></svg><div class="a" style="left:706.5px;top:172.5px;width:112.5px;height:171.8px;background:#333333;border-left:1px solid #262626;border-bottom:4px solid #282828;box-sizing:border-box;"></div><div class="a" style="left:707.5px;top:342px;width:111.5px;height:0.6px;background:#3a3a3a;"></div><div class="a" style="left:707.5px;top:172.5px;width:111.5px;height:14.1px;background:#282828;"></div><div class="a" style="left:748.5px;top:172.5px;width:37.8px;height:14.4px;background:#333333;"></div><div class="a t" style="left:711.40px;top:177.92px;font-size:6px;line-height:6px;color:#7a7a7a;transform:scaleX(0.7057);transform-origin:0 0;">Gr</div><div class="a t" style="left:721.50px;top:177.92px;font-size:6px;line-height:6px;color:#7a7a7a;transform:scaleX(0.8299);transform-origin:0 0;">Sb</div><div class="a t" style="left:731.70px;top:177.92px;font-size:6px;line-height:6px;color:#7a7a7a;transform:scaleX(0.8203);transform-origin:0 0;">Co</div><div class="a t" style="left:742.00px;top:177.92px;font-size:6px;line-height:6px;color:#7a7a7a;transform:scaleX(0.6954);transform-origin:0 0;">Sw</div><svg class="a" style="left:750.4px;top:177.2px;" width="3" height="6" viewBox="0 0 3 6"><path d="M0.3 2 L1.5 0.7 L2.7 2 M0.3 4 L1.5 5.3 L2.7 4" stroke="#bbb" fill="none" stroke-width="0.6"/></svg><div class="a t" style="left:755.00px;top:177.75px;font-size:6.2px;line-height:6.2px;color:#e4e4e4;transform:scaleX(0.8223);transform-origin:0 0;-webkit-text-stroke:0.2px #e4e4e4;">Color Guide</div><svg class="a" style="left:798.5px;top:177.5px;" width="5" height="4" viewBox="0 0 5 4"><path d="M0.5 0.3 L2 2 L0.5 3.7 M2.8 0.3 L4.3 2 L2.8 3.7" stroke="#ccc" fill="none" stroke-width="0.7"/></svg><div class="a" style="left:807.2px;top:176.5px;width:0.6px;height:6px;background:#555;"></div><svg class="a" style="left:811.2px;top:177.4px;" width="4.6" height="4.2" viewBox="0 0 4.6 4.2"><rect x="0" y="0" width="4.5" height="4.2" fill="#8a8a8a"/><path d="M0 1.4 H4.5 M0 2.8 H4.5" stroke="#2c2c2c" stroke-width="0.5"/></svg><div class="a" style="left:709.7px;top:190.9px;width:9.8px;height:10px;background:#e01010;border:1px solid #bbb;box-sizing:border-box;box-shadow:inset 0 0 0 0.5px #222;"></div><div class="a" style="left:723.5px;top:191.5px;width:81px;height:9px;background:#1e1e1e;"></div><div class="a" style="left:724.0px;top:192px;width:5.43px;height:8.2px;background:#a07a1c;"></div><div class="a" style="left:729.33px;top:192px;width:5.43px;height:8.2px;background:#e0b060;"></div><div class="a" style="left:734.67px;top:192px;width:5.43px;height:8.2px;background:#b8dc48;"></div><div class="a" style="left:740.0px;top:192px;width:5.43px;height:8.2px;background:#1e5a22;"></div><div class="a" style="left:745.33px;top:192px;width:5.43px;height:8.2px;background:#30b8c0;"></div><div class="a" style="left:750.67px;top:192px;width:5.43px;height:8.2px;background:#1c3848;"></div><div class="a" style="left:756.0px;top:192px;width:5.43px;height:8.2px;background:#2a34a0;"></div><div class="a" style="left:761.33px;top:192px;width:5.43px;height:8.2px;background:#3a2090;"></div><div class="a" style="left:766.67px;top:192px;width:5.43px;height:8.2px;background:#6a28b0;"></div><div class="a" style="left:772.0px;top:192px;width:5.43px;height:8.2px;background:#8a2098;"></div><div class="a" style="left:777.33px;top:192px;width:5.43px;height:8.2px;background:#9a3020;"></div><div class="a" style="left:782.67px;top:192px;width:5.43px;height:8.2px;background:#a83c28;"></div><div class="a" style="left:788.0px;top:192px;width:5.43px;height:8.2px;background:#a84e2a;"></div><div class="a" style="left:793.33px;top:192px;width:5.43px;height:8.2px;background:#b0602c;"></div><div class="a" style="left:798.67px;top:192px;width:5.43px;height:8.2px;background:#000000;"></div><div class="a" style="left:724px;top:192px;width:5.6px;height:8.2px;border:0.8px solid #bbb;box-sizing:border-box;"></div><div class="a" style="left:808.5px;top:190.5px;width:8px;height:10px;background:#2a2a2a;"></div><svg class="a" style="left:810.3px;top:194.5px;" width="4" height="3" viewBox="0 0 4 3"><path d="M0.5 0.5 L2 2 L3.5 0.5" stroke="#c0c0c0" fill="none" stroke-width="0.9"/></svg><div class="a t" style="left:721.30px;top:205.85px;font-size:6.2px;line-height:6.2px;color:#a0a0a0;transform:scaleX(0.8326);transform-origin:0 0;">Shades</div><svg class="a" style="left:761.5px;top:207px;" width="3" height="2.5" viewBox="0 0 3 2.5"><path d="M0 0 H3 L1.5 2.2 Z" fill="#ccc"/></svg><div class="a t" style="left:792.30px;top:205.85px;font-size:6.2px;line-height:6.2px;color:#a0a0a0;transform:scaleX(0.8935);transform-origin:0 0;">Tints</div><div class="a" style="left:709px;top:213.3px;width:107.5px;height:116.7px;background:#2d2d2d;border:1px solid #2a2a2a;box-sizing:border-box;"></div><svg class="a" style="left:0px;top:0px;left:0;top:0;" width="860" height="542" viewBox="0 0 860 542"><rect x="710.00" y="214.00" width="11.81" height="7.30" fill="#000"/><rect x="721.76" y="214.00" width="11.81" height="7.30" fill="#2a2010"/><rect x="733.51" y="214.00" width="11.81" height="7.30" fill="#50401a"/><rect x="745.27" y="214.00" width="11.81" height="7.30" fill="#7a5c1c"/><rect x="757.02" y="214.00" width="11.81" height="7.30" fill="#9c7a24"/><rect x="768.78" y="214.00" width="11.81" height="7.30" fill="#c0a060"/><rect x="780.53" y="214.00" width="11.81" height="7.30" fill="#d0b888"/><rect x="792.29" y="214.00" width="11.81" height="7.30" fill="#e0d0ac"/><rect x="804.04" y="214.00" width="11.81" height="7.30" fill="#eee6d8"/><rect x="710.00" y="221.25" width="11.81" height="7.30" fill="#000"/><rect x="721.76" y="221.25" width="11.81" height="7.30" fill="#3c2c14"/><rect x="733.51" y="221.25" width="11.81" height="7.30" fill="#806028"/><rect x="745.27" y="221.25" width="11.81" height="7.30" fill="#b89040"/><rect x="757.02" y="221.25" width="11.81" height="7.30" fill="#e0b060"/><rect x="768.78" y="221.25" width="11.81" height="7.30" fill="#e8c480"/><rect x="780.53" y="221.25" width="11.81" height="7.30" fill="#ecd4a0"/><rect x="792.29" y="221.25" width="11.81" height="7.30" fill="#f0e0c0"/><rect x="804.04" y="221.25" width="11.81" height="7.30" fill="#f6eedc"/><rect x="710.00" y="228.49" width="11.81" height="7.30" fill="#000"/><rect x="721.76" y="228.49" width="11.81" height="7.30" fill="#283008"/><rect x="733.51" y="228.49" width="11.81" height="7.30" fill="#5a7018"/><rect x="745.27" y="228.49" width="11.81" height="7.30" fill="#8aa828"/><rect x="757.02" y="228.49" width="11.81" height="7.30" fill="#b8dc48"/><rect x="768.78" y="228.49" width="11.81" height="7.30" fill="#c4e460"/><rect x="780.53" y="228.49" width="11.81" height="7.30" fill="#d4ea88"/><rect x="792.29" y="228.49" width="11.81" height="7.30" fill="#e0f0b0"/><rect x="804.04" y="228.49" width="11.81" height="7.30" fill="#eef6d6"/><rect x="710.00" y="235.74" width="11.81" height="7.30" fill="#000"/><rect x="721.76" y="235.74" width="11.81" height="7.30" fill="#0a1e08"/><rect x="733.51" y="235.74" width="11.81" height="7.30" fill="#0e3a0e"/><rect x="745.27" y="235.74" width="11.81" height="7.30" fill="#125614"/><rect x="757.02" y="235.74" width="11.81" height="7.30" fill="#0e6a10"/><rect x="768.78" y="235.74" width="11.81" height="7.30" fill="#4a9050"/><rect x="780.53" y="235.74" width="11.81" height="7.30" fill="#80b088"/><rect x="792.29" y="235.74" width="11.81" height="7.30" fill="#b0ccb4"/><rect x="804.04" y="235.74" width="11.81" height="7.30" fill="#dce8dc"/><rect x="710.00" y="242.99" width="11.81" height="7.30" fill="#000"/><rect x="721.76" y="242.99" width="11.81" height="7.30" fill="#0a3030"/><rect x="733.51" y="242.99" width="11.81" height="7.30" fill="#1a7080"/><rect x="745.27" y="242.99" width="11.81" height="7.30" fill="#20a0b0"/><rect x="757.02" y="242.99" width="11.81" height="7.30" fill="#30c0cc"/><rect x="768.78" y="242.99" width="11.81" height="7.30" fill="#50ccd4"/><rect x="780.53" y="242.99" width="11.81" height="7.30" fill="#80d8e0"/><rect x="792.29" y="242.99" width="11.81" height="7.30" fill="#b0e8ec"/><rect x="804.04" y="242.99" width="11.81" height="7.30" fill="#d8f4f6"/><rect x="710.00" y="250.23" width="11.81" height="7.30" fill="#000"/><rect x="721.76" y="250.23" width="11.81" height="7.30" fill="#081418"/><rect x="733.51" y="250.23" width="11.81" height="7.30" fill="#0c2028"/><rect x="745.27" y="250.23" width="11.81" height="7.30" fill="#0c3038"/><rect x="757.02" y="250.23" width="11.81" height="7.30" fill="#0c3848"/><rect x="768.78" y="250.23" width="11.81" height="7.30" fill="#4a6878"/><rect x="780.53" y="250.23" width="11.81" height="7.30" fill="#7a98a0"/><rect x="792.29" y="250.23" width="11.81" height="7.30" fill="#a8bcc0"/><rect x="804.04" y="250.23" width="11.81" height="7.30" fill="#d4dcdc"/><rect x="710.00" y="257.48" width="11.81" height="7.30" fill="#000"/><rect x="721.76" y="257.48" width="11.81" height="7.30" fill="#080c30"/><rect x="733.51" y="257.48" width="11.81" height="7.30" fill="#10185a"/><rect x="745.27" y="257.48" width="11.81" height="7.30" fill="#1a2a90"/><rect x="757.02" y="257.48" width="11.81" height="7.30" fill="#2030b0"/><rect x="768.78" y="257.48" width="11.81" height="7.30" fill="#5060c0"/><rect x="780.53" y="257.48" width="11.81" height="7.30" fill="#8090d0"/><rect x="792.29" y="257.48" width="11.81" height="7.30" fill="#b0b8e8"/><rect x="804.04" y="257.48" width="11.81" height="7.30" fill="#d8dcf4"/><rect x="710.00" y="264.73" width="11.81" height="7.30" fill="#000"/><rect x="721.76" y="264.73" width="11.81" height="7.30" fill="#100830"/><rect x="733.51" y="264.73" width="11.81" height="7.30" fill="#20105a"/><rect x="745.27" y="264.73" width="11.81" height="7.30" fill="#2a1888"/><rect x="757.02" y="264.73" width="11.81" height="7.30" fill="#3420a0"/><rect x="768.78" y="264.73" width="11.81" height="7.30" fill="#6850b0"/><rect x="780.53" y="264.73" width="11.81" height="7.30" fill="#9080c8"/><rect x="792.29" y="264.73" width="11.81" height="7.30" fill="#b8aadc"/><rect x="804.04" y="264.73" width="11.81" height="7.30" fill="#dcd4ee"/><rect x="710.00" y="271.97" width="11.81" height="7.30" fill="#000"/><rect x="721.76" y="271.97" width="11.81" height="7.30" fill="#180830"/><rect x="733.51" y="271.97" width="11.81" height="7.30" fill="#30106a"/><rect x="745.27" y="271.97" width="11.81" height="7.30" fill="#5018a0"/><rect x="757.02" y="271.97" width="11.81" height="7.30" fill="#6a20c0"/><rect x="768.78" y="271.97" width="11.81" height="7.30" fill="#9050d0"/><rect x="780.53" y="271.97" width="11.81" height="7.30" fill="#a878d8"/><rect x="792.29" y="271.97" width="11.81" height="7.30" fill="#c8a0e8"/><rect x="804.04" y="271.97" width="11.81" height="7.30" fill="#e4d0f4"/><rect x="710.00" y="279.22" width="11.81" height="7.30" fill="#000"/><rect x="721.76" y="279.22" width="11.81" height="7.30" fill="#200828"/><rect x="733.51" y="279.22" width="11.81" height="7.30" fill="#501060"/><rect x="745.27" y="279.22" width="11.81" height="7.30" fill="#7a1890"/><rect x="757.02" y="279.22" width="11.81" height="7.30" fill="#9a20b0"/><rect x="768.78" y="279.22" width="11.81" height="7.30" fill="#b050c0"/><rect x="780.53" y="279.22" width="11.81" height="7.30" fill="#c478d0"/><rect x="792.29" y="279.22" width="11.81" height="7.30" fill="#dca0e0"/><rect x="804.04" y="279.22" width="11.81" height="7.30" fill="#f0d0f0"/><rect x="710.00" y="286.47" width="11.81" height="7.30" fill="#000"/><rect x="721.76" y="286.47" width="11.81" height="7.30" fill="#200c08"/><rect x="733.51" y="286.47" width="11.81" height="7.30" fill="#501810"/><rect x="745.27" y="286.47" width="11.81" height="7.30" fill="#8a2818"/><rect x="757.02" y="286.47" width="11.81" height="7.30" fill="#a83020"/><rect x="768.78" y="286.47" width="11.81" height="7.30" fill="#c06050"/><rect x="780.53" y="286.47" width="11.81" height="7.30" fill="#d08878"/><rect x="792.29" y="286.47" width="11.81" height="7.30" fill="#e0b4a8"/><rect x="804.04" y="286.47" width="11.81" height="7.30" fill="#f0dcd4"/><rect x="710.00" y="293.71" width="11.81" height="7.30" fill="#000"/><rect x="721.76" y="293.71" width="11.81" height="7.30" fill="#200808"/><rect x="733.51" y="293.71" width="11.81" height="7.30" fill="#501410"/><rect x="745.27" y="293.71" width="11.81" height="7.30" fill="#8a2418"/><rect x="757.02" y="293.71" width="11.81" height="7.30" fill="#b03020"/><rect x="768.78" y="293.71" width="11.81" height="7.30" fill="#c86050"/><rect x="780.53" y="293.71" width="11.81" height="7.30" fill="#d89080"/><rect x="792.29" y="293.71" width="11.81" height="7.30" fill="#e4b8ac"/><rect x="804.04" y="293.71" width="11.81" height="7.30" fill="#f2dcd6"/><rect x="710.00" y="300.96" width="11.81" height="7.30" fill="#000"/><rect x="721.76" y="300.96" width="11.81" height="7.30" fill="#200c06"/><rect x="733.51" y="300.96" width="11.81" height="7.30" fill="#4c200c"/><rect x="745.27" y="300.96" width="11.81" height="7.30" fill="#7a3a14"/><rect x="757.02" y="300.96" width="11.81" height="7.30" fill="#a04e1c"/><rect x="768.78" y="300.96" width="11.81" height="7.30" fill="#c08050"/><rect x="780.53" y="300.96" width="11.81" height="7.30" fill="#d4a080"/><rect x="792.29" y="300.96" width="11.81" height="7.30" fill="#e4c4a8"/><rect x="804.04" y="300.96" width="11.81" height="7.30" fill="#f2e2d4"/><rect x="710.00" y="308.21" width="11.81" height="7.30" fill="#000"/><rect x="721.76" y="308.21" width="11.81" height="7.30" fill="#281408"/><rect x="733.51" y="308.21" width="11.81" height="7.30" fill="#603010"/><rect x="745.27" y="308.21" width="11.81" height="7.30" fill="#905018"/><rect x="757.02" y="308.21" width="11.81" height="7.30" fill="#b86020"/><rect x="768.78" y="308.21" width="11.81" height="7.30" fill="#d09050"/><rect x="780.53" y="308.21" width="11.81" height="7.30" fill="#e0b080"/><rect x="792.29" y="308.21" width="11.81" height="7.30" fill="#ecd0b0"/><rect x="804.04" y="308.21" width="11.81" height="7.30" fill="#f6e8d8"/><rect x="710.00" y="315.45" width="11.81" height="7.30" fill="#000"/><rect x="721.76" y="315.45" width="11.81" height="7.30" fill="#000"/><rect x="733.51" y="315.45" width="11.81" height="7.30" fill="#000"/><rect x="745.27" y="315.45" width="11.81" height="7.30" fill="#000"/><rect x="757.02" y="315.45" width="11.81" height="7.30" fill="#000"/><rect x="780.53" y="315.45" width="11.81" height="7.30" fill="#6e6e6e"/><rect x="792.29" y="315.45" width="11.81" height="7.30" fill="#a0a0a0"/><rect x="804.04" y="315.45" width="11.81" height="7.30" fill="#d0d0d0"/><path d="M721.76 214 V322.7" stroke="#2a2a2a" stroke-width="0.6"/><path d="M733.51 214 V322.7" stroke="#2a2a2a" stroke-width="0.6"/><path d="M745.27 214 V322.7" stroke="#2a2a2a" stroke-width="0.6"/><path d="M757.02 214 V322.7" stroke="#2a2a2a" stroke-width="0.6"/><path d="M768.78 214 V322.7" stroke="#2a2a2a" stroke-width="0.6"/><path d="M780.53 214 V322.7" stroke="#2a2a2a" stroke-width="0.6"/><path d="M792.29 214 V322.7" stroke="#2a2a2a" stroke-width="0.6"/><path d="M804.04 214 V322.7" stroke="#2a2a2a" stroke-width="0.6"/><path d="M710 221.25 H815.8" stroke="#2a2a2a" stroke-width="0.6"/><path d="M710 228.49 H815.8" stroke="#2a2a2a" stroke-width="0.6"/><path d="M710 235.74 H815.8" stroke="#2a2a2a" stroke-width="0.6"/><path d="M710 242.99 H815.8" stroke="#2a2a2a" stroke-width="0.6"/><path d="M710 250.23 H815.8" stroke="#2a2a2a" stroke-width="0.6"/><path d="M710 257.48 H815.8" stroke="#2a2a2a" stroke-width="0.6"/><path d="M710 264.73 H815.8" stroke="#2a2a2a" stroke-width="0.6"/><path d="M710 271.97 H815.8" stroke="#2a2a2a" stroke-width="0.6"/><path d="M710 279.22 H815.8" stroke="#2a2a2a" stroke-width="0.6"/><path d="M710 286.47 H815.8" stroke="#2a2a2a" stroke-width="0.6"/><path d="M710 293.71 H815.8" stroke="#2a2a2a" stroke-width="0.6"/><path d="M710 300.96 H815.8" stroke="#2a2a2a" stroke-width="0.6"/><path d="M710 308.21 H815.8" stroke="#2a2a2a" stroke-width="0.6"/><path d="M710 315.45 H815.8" stroke="#2a2a2a" stroke-width="0.6"/></svg><svg class="a" style="left:711.5px;top:332.5px;" width="9" height="6" viewBox="0 0 9 6"><rect x="0.5" y="0.5" width="6.5" height="5" stroke="#bbb" fill="none" stroke-width="0.8"/><path d="M2.7 0.5 V5.5 M4.8 0.5 V5.5" stroke="#bbb" stroke-width="0.7"/><circle cx="8.3" cy="5.3" r="0.6" fill="#bbb"/></svg><div class="a t" style="left:725.00px;top:333.52px;font-size:6px;line-height:6px;color:#a8a8a8;transform:scaleX(0.7880);transform-origin:0 0;">None</div><svg class="a" style="left:784.9px;top:330.8px;" width="10" height="10" viewBox="0 0 10 10"><circle cx="5" cy="5" r="3.3" fill="#c8c8c8"/><path d="M3 4 C4 3 6 3 7 4.5" stroke="#333" fill="none" stroke-width="0.7"/></svg><svg class="a" style="left:799px;top:332.5px;" width="9" height="7" viewBox="0 0 9 7"><rect x="3" y="0.5" width="5.5" height="6" stroke="#bbb" fill="none" stroke-width="0.8"/><path d="M5 0.5 V6.5 M7 0.5 V6.5" stroke="#bbb" stroke-width="0.6"/><path d="M0.5 5.5 H2.5 M1.5 4.5 V6.5" stroke="#bbb" stroke-width="0.8"/></svg><div class="a" style="left:380px;top:237px;width:324px;height:290.5px;background:#f4f4f4;border-right:1px solid #a8a8a8;border-bottom:1px solid #a8a8a8;box-sizing:border-box;"></div><div class="a" style="left:376px;top:234px;width:324px;height:287.5px;background:#333333;"></div><div class="a" style="left:376px;top:234px;width:324px;height:14.8px;background:#474747;"></div><div class="a t" style="left:379.80px;top:238.58px;font-size:6.4px;line-height:6.4px;color:#e0e0e0;transform:scaleX(0.9222);transform-origin:0 0;-webkit-text-stroke:0.15px #e0e0e0;">Recolor Artwork</div><div class="a" style="left:385.8px;top:259.8px;width:10px;height:9.5px;background:#a07a1a;border:1.2px solid #777;box-sizing:border-box;"></div><div class="a" style="left:401.5px;top:259.5px;width:161px;height:10px;background:#262626;"></div><div class="a" style="left:402.5px;top:260.2px;width:7.85px;height:8.6px;background:#9c7a1c;"></div><div class="a" style="left:410.3px;top:260.2px;width:7.85px;height:8.6px;background:#e0b060;"></div><div class="a" style="left:418.1px;top:260.2px;width:7.85px;height:8.6px;background:#b8dc48;"></div><div class="a" style="left:425.9px;top:260.2px;width:7.85px;height:8.6px;background:#1e5a22;"></div><div class="a" style="left:433.7px;top:260.2px;width:7.85px;height:8.6px;background:#30b8c0;"></div><div class="a" style="left:441.5px;top:260.2px;width:7.85px;height:8.6px;background:#1c3848;"></div><div class="a" style="left:449.3px;top:260.2px;width:7.85px;height:8.6px;background:#2a34a0;"></div><div class="a" style="left:457.1px;top:260.2px;width:7.85px;height:8.6px;background:#3a2090;"></div><div class="a" style="left:464.9px;top:260.2px;width:7.85px;height:8.6px;background:#6a28b0;"></div><div class="a" style="left:472.7px;top:260.2px;width:7.85px;height:8.6px;background:#8a2098;"></div><div class="a" style="left:480.5px;top:260.2px;width:7.85px;height:8.6px;background:#9a3020;"></div><div class="a" style="left:488.3px;top:260.2px;width:7.85px;height:8.6px;background:#a83c28;"></div><div class="a" style="left:496.1px;top:260.2px;width:7.85px;height:8.6px;background:#a84e2a;"></div><div class="a" style="left:503.9px;top:260.2px;width:7.85px;height:8.6px;background:#b0602c;"></div><div class="a" style="left:511.7px;top:260.2px;width:7.85px;height:8.6px;background:#000000;"></div><div class="a" style="left:402.3px;top:259.8px;width:8.5px;height:9.2px;border:1px solid #aaa;box-sizing:border-box;"></div><div class="a" style="left:562.2px;top:259.5px;width:8px;height:10px;background:#2a2a2a;border-left:1px solid #3a3a3a;box-sizing:border-box;"></div><svg class="a" style="left:564.3px;top:263.4px;" width="4" height="3" viewBox="0 0 4 3"><path d="M0.5 0.5 L2 2 L3.5 0.5" stroke="#c0c0c0" fill="none" stroke-width="0.9"/></svg><div class="a" style="left:575.5px;top:259.8px;width:61.5px;height:9.4px;background:#262626;"></div><div class="a t" style="left:578.30px;top:261.48px;font-size:6.4px;line-height:6.4px;color:#cccccc;transform:scaleX(0.9305);transform-origin:0 0;">Variant Scheme 02</div><svg class="a" style="left:639.5px;top:259.5px;" width="10" height="10" viewBox="0 0 10 10"><path d="M1.5 8.5 L2 7 L6 3 L7 4 L3 8 Z" stroke="#c8c8c8" fill="none" stroke-width="0.9"/><path d="M5.5 2.5 L7 1 C8 0.5 9.5 2 9 3 L7.5 4.5 Z" fill="#c8c8c8"/></svg><svg class="a" style="left:653.0px;top:259.5px;" width="10" height="10" viewBox="0 0 10 10"><path d="M5 1 V5.5 M3 3.8 L5 5.8 L7 3.8" stroke="#c8c8c8" fill="none" stroke-width="1"/><path d="M1 6 V8.5 H9 V6" stroke="#c8c8c8" fill="none" stroke-width="1.1"/></svg><svg class="a" style="left:665.0px;top:259.5px;" width="10" height="10" viewBox="0 0 10 10"><path d="M1 2 H4 L5 3 H9 V8.5 H1 Z" fill="#c8c8c8"/></svg><svg class="a" style="left:676.2px;top:259.5px;" width="10" height="10" viewBox="0 0 10 10"><path d="M2 3 H8 L7.5 9 H2.5 Z" fill="#9a9a9a"/><path d="M1.5 2.2 H8.5 M4 1 H6" stroke="#9a9a9a" stroke-width="0.9"/></svg><div class="a" style="left:386.3px;top:280.8px;width:175px;height:152.8px;border:1px solid #2d2d2d;border-radius:2px;box-sizing:border-box;"></div><div class="a" style="left:451.3px;top:276.3px;width:45.4px;height:9.2px;background:#333333;border:1px solid #2b2b2b;border-radius:1px;box-sizing:border-box;"></div><div class="a" style="left:452.2px;top:277.2px;width:17.3px;height:7.4px;background:#242424;"></div><div class="a t" style="left:455.90px;top:277.98px;font-size:6.4px;line-height:6.4px;color:#4c9be8;transform:scaleX(0.8877);transform-origin:0 0;-webkit-text-stroke:0.15px #4c9be8;">Edit</div><div class="a t" style="left:475.00px;top:277.98px;font-size:6.4px;line-height:6.4px;color:#d8d8d8;transform:scaleX(0.8854);transform-origin:0 0;">Assign</div><div class="a" style="left:413px;top:293.2px;width:120px;height:120.6px;background:#303030;"></div><div class="a" style="left:419.5px;top:298.8px;width:109.2px;height:109.2px;border-radius:50%;background:#fff;"></div><div class="a" style="left:421.3px;top:300.6px;width:105.6px;height:105.6px;border-radius:50%;background:radial-gradient(circle closest-side, rgba(140,134,126,1) 0%, rgba(140,134,126,0.55) 40%, rgba(140,134,126,0) 100%),conic-gradient(from 0deg, #9c7a1e 0deg, #a0621e 40deg, #a43a1c 70deg, #a81222 95deg, #a01060 120deg, #9418a4 140deg, #5a18a8 165deg, #2418a4 185deg, #1c40a8 210deg, #18808c 235deg, #149a48 260deg, #1a9228 280deg, #5c8c20 310deg, #8a8420 340deg, #9c7a1e 360deg);"></div><svg class="a" style="left:412px;top:292px;" width="130" height="120" viewBox="0 0 130 120"><line x1="62.10000000000002" y1="61.39999999999998" x2="68.39999999999998" y2="26.80000000000001" stroke="#2e2e2e" stroke-opacity="0.85" stroke-width="0.75"/><line x1="62.10000000000002" y1="61.39999999999998" x2="33" y2="27.69999999999999" stroke="#2e2e2e" stroke-opacity="0.85" stroke-width="0.75"/><line x1="62.10000000000002" y1="61.39999999999998" x2="93.89999999999998" y2="31.399999999999977" stroke="#2e2e2e" stroke-opacity="0.85" stroke-width="0.75"/><line x1="62.10000000000002" y1="61.39999999999998" x2="98.30000000000001" y2="37" stroke="#2e2e2e" stroke-opacity="0.85" stroke-width="0.75"/><line x1="62.10000000000002" y1="61.39999999999998" x2="103.39999999999998" y2="48" stroke="#2e2e2e" stroke-opacity="0.85" stroke-width="0.75"/><line x1="62.10000000000002" y1="61.39999999999998" x2="104.29999999999995" y2="50.69999999999999" stroke="#2e2e2e" stroke-opacity="0.85" stroke-width="0.75"/><line x1="62.10000000000002" y1="61.39999999999998" x2="18.19999999999999" y2="52" stroke="#2e2e2e" stroke-opacity="0.85" stroke-width="0.75"/><line x1="62.10000000000002" y1="61.39999999999998" x2="23.69999999999999" y2="84" stroke="#2e2e2e" stroke-opacity="0.85" stroke-width="0.75"/><line x1="62.10000000000002" y1="61.39999999999998" x2="28.600000000000023" y2="90.60000000000002" stroke="#2e2e2e" stroke-opacity="0.85" stroke-width="0.75"/><line x1="62.10000000000002" y1="61.39999999999998" x2="44.5" y2="102" stroke="#2e2e2e" stroke-opacity="0.85" stroke-width="0.75"/><line x1="62.10000000000002" y1="61.39999999999998" x2="65.80000000000001" y2="105" stroke="#2e2e2e" stroke-opacity="0.85" stroke-width="0.75"/><line x1="62.10000000000002" y1="61.39999999999998" x2="77.69999999999999" y2="102" stroke="#2e2e2e" stroke-opacity="0.85" stroke-width="0.75"/><line x1="62.10000000000002" y1="61.39999999999998" x2="91" y2="93.89999999999998" stroke="#2e2e2e" stroke-opacity="0.85" stroke-width="0.75"/><line x1="62.10000000000002" y1="61.39999999999998" x2="68.39999999999998" y2="26.80000000000001" stroke="#2e2e2e" stroke-width="0.9"/><circle cx="70" cy="18" r="5" stroke="#3a3a3a" stroke-width="2" fill="none"/><circle cx="68.39999999999998" cy="26.80000000000001" r="3" stroke="#dcdcdc" stroke-width="1" fill="#dab060"/><circle cx="68.39999999999998" cy="26.80000000000001" r="3.7" stroke="#333" stroke-opacity="0.55" stroke-width="0.5" fill="none"/><circle cx="33" cy="27.69999999999999" r="3" stroke="#dcdcdc" stroke-width="1" fill="#b8dc48"/><circle cx="33" cy="27.69999999999999" r="3.7" stroke="#333" stroke-opacity="0.55" stroke-width="0.5" fill="none"/><circle cx="93.89999999999998" cy="31.399999999999977" r="3" stroke="#dcdcdc" stroke-width="1.05" fill="none"/><circle cx="93.89999999999998" cy="31.399999999999977" r="3.7" stroke="#333" stroke-opacity="0.55" stroke-width="0.5" fill="none"/><circle cx="98.30000000000001" cy="37" r="3" stroke="#dcdcdc" stroke-width="1.05" fill="none"/><circle cx="98.30000000000001" cy="37" r="3.7" stroke="#333" stroke-opacity="0.55" stroke-width="0.5" fill="none"/><circle cx="103.39999999999998" cy="48" r="3" stroke="#dcdcdc" stroke-width="1" fill="#a83c28"/><circle cx="103.39999999999998" cy="48" r="3.7" stroke="#333" stroke-opacity="0.55" stroke-width="0.5" fill="none"/><circle cx="104.29999999999995" cy="50.69999999999999" r="3" stroke="#dcdcdc" stroke-width="1.05" fill="none"/><circle cx="104.29999999999995" cy="50.69999999999999" r="3.7" stroke="#333" stroke-opacity="0.55" stroke-width="0.5" fill="none"/><circle cx="18.19999999999999" cy="52" r="3" stroke="#dcdcdc" stroke-width="1" fill="#1e5a22"/><circle cx="18.19999999999999" cy="52" r="3.7" stroke="#333" stroke-opacity="0.55" stroke-width="0.5" fill="none"/><circle cx="23.69999999999999" cy="84" r="3" stroke="#dcdcdc" stroke-width="1" fill="#30b8c0"/><circle cx="23.69999999999999" cy="84" r="3.7" stroke="#333" stroke-opacity="0.55" stroke-width="0.5" fill="none"/><circle cx="28.600000000000023" cy="90.60000000000002" r="3" stroke="#dcdcdc" stroke-width="1" fill="#1c3848"/><circle cx="28.600000000000023" cy="90.60000000000002" r="3.7" stroke="#333" stroke-opacity="0.55" stroke-width="0.5" fill="none"/><circle cx="44.5" cy="102" r="3" stroke="#dcdcdc" stroke-width="1.05" fill="none"/><circle cx="44.5" cy="102" r="3.7" stroke="#333" stroke-opacity="0.55" stroke-width="0.5" fill="none"/><circle cx="65.80000000000001" cy="105" r="3" stroke="#dcdcdc" stroke-width="1.05" fill="none"/><circle cx="65.80000000000001" cy="105" r="3.7" stroke="#333" stroke-opacity="0.55" stroke-width="0.5" fill="none"/><circle cx="77.69999999999999" cy="102" r="3" stroke="#dcdcdc" stroke-width="1.05" fill="none"/><circle cx="77.69999999999999" cy="102" r="3.7" stroke="#333" stroke-opacity="0.55" stroke-width="0.5" fill="none"/><circle cx="91" cy="93.89999999999998" r="3" stroke="#dcdcdc" stroke-width="1.05" fill="none"/><circle cx="91" cy="93.89999999999998" r="3.7" stroke="#333" stroke-opacity="0.55" stroke-width="0.5" fill="none"/><circle cx="62.10000000000002" cy="61.39999999999998" r="2.4" fill="#000"/></svg><div class="a" style="left:393.8px;top:417.2px;width:35px;height:11.2px;background:#333333;border:1px solid #2d2d2d;box-sizing:border-box;"></div><div class="a" style="left:394px;top:417.4px;width:10.7px;height:10.8px;background:#1f1f1f;"></div><svg class="a" style="left:394.0px;top:417.8px;" width="10" height="10" viewBox="0 0 10 10"><circle cx="5" cy="5" r="3.4" stroke="#d0d0d0" fill="none" stroke-width="0.9"/><circle cx="5" cy="5" r="1.3" fill="#111"/></svg><svg class="a" style="left:406.0px;top:417.8px;" width="10" height="10" viewBox="0 0 10 10"><circle cx="5" cy="5" r="3.6" stroke="#d0d0d0" fill="none" stroke-width="0.9"/><circle cx="5" cy="5" r="1.6" stroke="#d0d0d0" fill="none" stroke-width="0.8"/><path d="M5 1.4 V3.4 M5 6.6 V8.6 M1.4 5 H3.4 M6.6 5 H8.6" stroke="#d0d0d0" stroke-width="0.7"/></svg><svg class="a" style="left:417.8px;top:417.8px;" width="10" height="10" viewBox="0 0 10 10"><rect x="1.5" y="1.3" width="7" height="7.4" rx="0.6" stroke="#c8c8c8" fill="none" stroke-width="0.9"/><path d="M4 1.5 V8.5 M6 1.5 V8.5" stroke="#c8c8c8" stroke-width="0.7"/></svg><div class="a" style="left:462px;top:414.4px;width:20.5px;height:10.2px;background:#333333;border:1px solid #2d2d2d;box-sizing:border-box;"></div><div class="a" style="left:462px;top:414.4px;width:10.3px;height:10.2px;background:#1f1f1f;"></div><svg class="a" style="left:461.8px;top:414.5px;" width="10" height="10" viewBox="0 0 10 10"><circle cx="5" cy="5" r="3.1" stroke="#cfcfcf" fill="#8a8a8a" stroke-width="1"/><circle cx="5" cy="5" r="1.2" fill="#cfcfcf"/></svg><svg class="a" style="left:472.8px;top:414.5px;" width="10" height="10" viewBox="0 0 10 10"><circle cx="5" cy="5" r="3.1" stroke="#dcdcdc" fill="#777" stroke-width="1.2"/></svg><div class="a" style="left:444.2px;top:427.8px;width:56.8px;height:0.9px;background:#4e4e4e;"></div><div class="a" style="left:467.8px;top:424.6px;width:6.5px;height:6.5px;background:#333;border:1.2px solid #d0d0d0;border-radius:50%;box-sizing:border-box;"></div><svg class="a" style="left:517px;top:418.5px;" width="10" height="9" viewBox="0 0 10 9"><circle cx="4" cy="5.5" r="2.4" stroke="#c8c8c8" fill="none" stroke-width="0.95"/><path d="M4.4 3.1 V1.2" stroke="#c8c8c8" stroke-width="0.9"/><path d="M7.1 2.3 H9 M8.05 1.35 V3.25" stroke="#c8c8c8" stroke-width="0.7"/></svg><svg class="a" style="left:530px;top:418.5px;" width="10" height="9" viewBox="0 0 10 9"><circle cx="4" cy="5.5" r="2.4" stroke="#c8c8c8" fill="none" stroke-width="0.95"/><path d="M4.4 3.1 V1.2" stroke="#c8c8c8" stroke-width="0.9"/><path d="M6.9 1.9 H9" stroke="#c8c8c8" stroke-width="0.7"/></svg><svg class="a" style="left:542.7px;top:418.2px;" width="10" height="9" viewBox="0 0 10 9"><rect x="3.4" y="0.6" width="3.2" height="4" rx="1.6" stroke="#c8c8c8" fill="none" stroke-width="0.85"/><rect x="3.4" y="4.4" width="3.2" height="4" rx="1.6" stroke="#c8c8c8" fill="none" stroke-width="0.85"/><path d="M0.8 4.5 H2.2 M7.8 4.5 H9.2" stroke="#c8c8c8" stroke-width="0.8" stroke-dasharray="0.6 0.4"/></svg><div class="a t" style="left:550.30px;top:434.65px;font-size:6.2px;line-height:6.2px;color:#bdbdbd;transform:scaleX(0.7356);transform-origin:0 0;">None</div><svg class="a" style="left:549px;top:443.2px;" width="10" height="6" viewBox="0 0 10 6"><rect x="0.45" y="0.45" width="7.6" height="5.1" stroke="#c8c8c8" fill="none" stroke-width="0.9"/><path d="M3 0.5 V5.5 M5.5 0.5 V5.5" stroke="#c8c8c8" stroke-width="0.8"/><circle cx="9.3" cy="5.2" r="0.6" fill="#c8c8c8"/></svg><div class="a" style="left:385.8px;top:440px;width:14.5px;height:15px;background:#a88418;border:0.9px solid #dcdcdc;box-shadow:0 0 0 0.6px #1e1e1e;box-sizing:border-box;"></div><svg class="a" style="left:385.8px;top:462px;" width="6.4" height="6.4" viewBox="0 0 6.4 6.4"><circle cx="3.2" cy="3.2" r="2.9" fill="#a8a8a8"/><path d="M1 2.2 L3.2 3.3 L5.4 2.2 M3.2 3.3 V6" stroke="#555" fill="none" stroke-width="0.6"/></svg><div class="a" style="left:393px;top:461.2px;width:7.7px;height:7.9px;background:#b06828;border:0.9px solid #e6d6c0;box-shadow:0 0 0 0.5px #1e1e1e;box-sizing:border-box;"></div><div class="a t" style="left:405.60px;top:442.74px;font-size:6.8px;line-height:6.8px;color:#ababab;transform:scaleX(0.8987);transform-origin:0 0;">H</div><div class="a t" style="left:405.90px;top:458.74px;font-size:6.8px;line-height:6.8px;color:#ababab;transform:scaleX(0.8625);transform-origin:0 0;">S</div><div class="a t" style="left:405.90px;top:474.84px;font-size:6.8px;line-height:6.8px;color:#ababab;transform:scaleX(0.8625);transform-origin:0 0;">B</div><div class="a" style="left:414.7px;top:444.4px;width:53.9px;height:2.1px;background:linear-gradient(to right,#c01818,#c8a018 15%,#30b030 35%,#18a8b0 55%,#1828c0 70%,#a018c0 85%,#c01850);"></div><div class="a" style="left:414.7px;top:460.4px;width:53.9px;height:2.1px;background:linear-gradient(to right,#c8c8c8,#c89a20);"></div><div class="a" style="left:414.7px;top:476.5px;width:53.9px;height:2.1px;background:linear-gradient(to right,#000,#f0b818);"></div><svg class="a" style="left:418.70000000000005px;top:446.3px;" width="4.8" height="3.8" viewBox="0 0 4.8 3.8"><path d="M2.4 0 L4.8 2 V3.8 H0 V2 Z" fill="#e0e0e0"/></svg><svg class="a" style="left:457.1px;top:462.3px;" width="4.8" height="3.8" viewBox="0 0 4.8 3.8"><path d="M2.4 0 L4.8 2 V3.8 H0 V2 Z" fill="#e0e0e0"/></svg><svg class="a" style="left:444.3px;top:478.4px;" width="4.8" height="3.8" viewBox="0 0 4.8 3.8"><path d="M2.4 0 L4.8 2 V3.8 H0 V2 Z" fill="#e0e0e0"/></svg><div class="a" style="left:472.6px;top:440.9px;width:23.7px;height:9.1px;background:#262626;border-radius:1px;"></div><div class="a t" style="left:474.60px;top:442.74px;font-size:6.8px;line-height:6.8px;color:#d4d4d4;transform:scaleX(0.9452);transform-origin:0 0;">42.74</div><div class="a t" style="left:497.70px;top:443.34px;font-size:6.8px;line-height:6.8px;color:#b8b8b8;transform:scaleX(0.9559);transform-origin:0 0;">°</div><div class="a" style="left:472.6px;top:457px;width:23.7px;height:9.1px;background:#262626;border-radius:1px;"></div><div class="a t" style="left:474.60px;top:458.84px;font-size:6.8px;line-height:6.8px;color:#d4d4d4;transform:scaleX(0.9452);transform-origin:0 0;">82.55</div><div class="a t" style="left:497.70px;top:458.84px;font-size:6.8px;line-height:6.8px;color:#b8b8b8;transform:scaleX(0.9088);transform-origin:0 0;">%</div><div class="a" style="left:472.6px;top:473px;width:23.7px;height:9.1px;background:#262626;border-radius:1px;"></div><div class="a t" style="left:474.60px;top:474.84px;font-size:6.8px;line-height:6.8px;color:#d4d4d4;transform:scaleX(0.9452);transform-origin:0 0;">59.22</div><div class="a t" style="left:497.70px;top:474.84px;font-size:6.8px;line-height:6.8px;color:#b8b8b8;transform:scaleX(0.9088);transform-origin:0 0;">%</div><div class="a" style="left:510.2px;top:443px;width:5.9px;height:4.9px;background:#5a5a5a;"></div><div class="a" style="left:386.2px;top:500.9px;width:6px;height:6.4px;background:#c4c4c4;border-radius:0.6px;"></div><svg class="a" style="left:386.8px;top:502px;" width="4.8" height="4" viewBox="0 0 4.8 4"><path d="M0.6 2 L1.9 3.4 L4.2 0.6" stroke="#222" fill="none" stroke-width="1"/></svg><div class="a t" style="left:394.30px;top:501.84px;font-size:6.8px;line-height:6.8px;color:#d4d4d4;transform:scaleX(0.8565);transform-origin:0 0;">Recolor Art</div><div class="a t" style="left:566.20px;top:276.79px;font-size:5.8px;line-height:5.8px;color:#9a9a9a;transform:scaleX(0.8062);transform-origin:0 0;">Color Groups</div><div class="a" style="left:566.5px;top:283.8px;width:121px;height:199.5px;border:1px solid #2b2b2b;border-radius:1px;box-sizing:border-box;"></div><div class="a" style="left:567px;top:298.2px;width:120px;height:0.8px;background:#2b2b2b;"></div><div class="a" style="left:567px;top:311.9px;width:120px;height:0.8px;background:#2b2b2b;"></div><div class="a" style="left:567px;top:325.7px;width:120px;height:0.8px;background:#2b2b2b;"></div><div class="a" style="left:567.5px;top:326.2px;width:119px;height:13.8px;background:#3d4e60;"></div><svg class="a" style="left:570px;top:289.1px;" width="3" height="4.4" viewBox="0 0 3 4.4"><path d="M0.4 0.4 L2.4 2.2 L0.4 4" stroke="#c0c0c0" fill="none" stroke-width="0.8"/></svg><svg class="a" style="left:570px;top:302.8px;" width="3" height="4.4" viewBox="0 0 3 4.4"><path d="M0.4 0.4 L2.4 2.2 L0.4 4" stroke="#c0c0c0" fill="none" stroke-width="0.8"/></svg><svg class="a" style="left:570px;top:316.6px;" width="3" height="4.4" viewBox="0 0 3 4.4"><path d="M0.4 0.4 L2.4 2.2 L0.4 4" stroke="#c0c0c0" fill="none" stroke-width="0.8"/></svg><svg class="a" style="left:570px;top:330.40000000000003px;" width="3" height="4.4" viewBox="0 0 3 4.4"><path d="M0.4 0.4 L2.4 2.2 L0.4 4" stroke="#c0c0c0" fill="none" stroke-width="0.8"/></svg><div class="a" style="left:579.4px;top:287.2px;width:8.6px;height:8px;background:#000;"></div><div class="a t" style="left:589.50px;top:288.70px;font-size:6.5px;line-height:6.5px;color:#e0e0e0;transform:scaleX(0.8544);transform-origin:0 0;">Grays</div><div class="a" style="left:579.4px;top:301.1px;width:50.3px;height:7.9px;background:#000;"></div><div class="a" style="left:580.2px;top:301.70000000000005px;width:3.48px;height:6.7px;background:#c81010;"></div><div class="a" style="left:583.63px;top:301.70000000000005px;width:3.48px;height:6.7px;background:#e02020;"></div><div class="a" style="left:587.06px;top:301.70000000000005px;width:3.48px;height:6.7px;background:#e08020;"></div><div class="a" style="left:590.49px;top:301.70000000000005px;width:3.48px;height:6.7px;background:#705020;"></div><div class="a" style="left:593.91px;top:301.70000000000005px;width:3.48px;height:6.7px;background:#80c020;"></div><div class="a" style="left:597.34px;top:301.70000000000005px;width:3.48px;height:6.7px;background:#305010;"></div><div class="a" style="left:600.77px;top:301.70000000000005px;width:3.48px;height:6.7px;background:#10a030;"></div><div class="a" style="left:604.2px;top:301.70000000000005px;width:3.48px;height:6.7px;background:#109060;"></div><div class="a" style="left:607.63px;top:301.70000000000005px;width:3.48px;height:6.7px;background:#1090a0;"></div><div class="a" style="left:611.06px;top:301.70000000000005px;width:3.48px;height:6.7px;background:#1040a0;"></div><div class="a" style="left:614.49px;top:301.70000000000005px;width:3.48px;height:6.7px;background:#5010a0;"></div><div class="a" style="left:617.91px;top:301.70000000000005px;width:3.48px;height:6.7px;background:#7010b0;"></div><div class="a" style="left:621.34px;top:301.70000000000005px;width:3.48px;height:6.7px;background:#a010a0;"></div><div class="a" style="left:624.77px;top:301.70000000000005px;width:3.48px;height:6.7px;background:#a01080;"></div><div class="a" style="left:579.4px;top:314.9px;width:50.3px;height:7.9px;background:#000;"></div><div class="a" style="left:580.2px;top:315.5px;width:3.48px;height:6.7px;background:#e05010;"></div><div class="a" style="left:583.63px;top:315.5px;width:3.48px;height:6.7px;background:#e08010;"></div><div class="a" style="left:587.06px;top:315.5px;width:3.48px;height:6.7px;background:#e0b020;"></div><div class="a" style="left:590.49px;top:315.5px;width:3.48px;height:6.7px;background:#606010;"></div><div class="a" style="left:593.91px;top:315.5px;width:3.48px;height:6.7px;background:#20c030;"></div><div class="a" style="left:597.34px;top:315.5px;width:3.48px;height:6.7px;background:#104010;"></div><div class="a" style="left:600.77px;top:315.5px;width:3.48px;height:6.7px;background:#10a0a0;"></div><div class="a" style="left:604.2px;top:315.5px;width:3.48px;height:6.7px;background:#1040a0;"></div><div class="a" style="left:607.63px;top:315.5px;width:3.48px;height:6.7px;background:#1010c0;"></div><div class="a" style="left:611.06px;top:315.5px;width:3.48px;height:6.7px;background:#2010a0;"></div><div class="a" style="left:614.49px;top:315.5px;width:3.48px;height:6.7px;background:#a01060;"></div><div class="a" style="left:617.91px;top:315.5px;width:3.48px;height:6.7px;background:#a01060;"></div><div class="a" style="left:621.34px;top:315.5px;width:3.48px;height:6.7px;background:#a01020;"></div><div class="a" style="left:624.77px;top:315.5px;width:3.48px;height:6.7px;background:#a01010;"></div><div class="a" style="left:579.4px;top:328.6px;width:50.3px;height:7.9px;background:#000;"></div><div class="a" style="left:580.2px;top:329.20000000000005px;width:3.48px;height:6.7px;background:#e05010;"></div><div class="a" style="left:583.63px;top:329.20000000000005px;width:3.48px;height:6.7px;background:#e08010;"></div><div class="a" style="left:587.06px;top:329.20000000000005px;width:3.48px;height:6.7px;background:#e0b020;"></div><div class="a" style="left:590.49px;top:329.20000000000005px;width:3.48px;height:6.7px;background:#606010;"></div><div class="a" style="left:593.91px;top:329.20000000000005px;width:3.48px;height:6.7px;background:#20c030;"></div><div class="a" style="left:597.34px;top:329.20000000000005px;width:3.48px;height:6.7px;background:#104010;"></div><div class="a" style="left:600.77px;top:329.20000000000005px;width:3.48px;height:6.7px;background:#10a0a0;"></div><div class="a" style="left:604.2px;top:329.20000000000005px;width:3.48px;height:6.7px;background:#1040a0;"></div><div class="a" style="left:607.63px;top:329.20000000000005px;width:3.48px;height:6.7px;background:#1010c0;"></div><div class="a" style="left:611.06px;top:329.20000000000005px;width:3.48px;height:6.7px;background:#2010a0;"></div><div class="a" style="left:614.49px;top:329.20000000000005px;width:3.48px;height:6.7px;background:#a01060;"></div><div class="a" style="left:617.91px;top:329.20000000000005px;width:3.48px;height:6.7px;background:#a01060;"></div><div class="a" style="left:621.34px;top:329.20000000000005px;width:3.48px;height:6.7px;background:#a01020;"></div><div class="a" style="left:624.77px;top:329.20000000000005px;width:3.48px;height:6.7px;background:#a01010;"></div><div class="a t" style="left:631.20px;top:302.50px;font-size:6.5px;line-height:6.5px;color:#e0e0e0;transform:scaleX(0.8059);transform-origin:0 0;">bASE cOLOURS</div><div class="a t" style="left:631.20px;top:316.30px;font-size:6.5px;line-height:6.5px;color:#e0e0e0;transform:scaleX(0.8366);transform-origin:0 0;">vARIANT sCHEME 01</div><div class="a t" style="left:631.80px;top:330.20px;font-size:6.5px;line-height:6.5px;color:#e8e8e8;transform:scaleX(0.8737);transform-origin:0 0;font-style:italic;">Variant Scheme 02</div><svg class="a" style="left:691.8px;top:382.2px;" width="4" height="5" viewBox="0 0 4 5"><path d="M3.6 0 V5 L0 2.5 Z" fill="#c8c8c8"/></svg><div class="a" style="left:595.8px;top:500px;width:44.7px;height:12.3px;border:1px solid #c8c8c8;border-radius:6.2px;box-sizing:border-box;"></div><div class="a t" style="left:614.30px;top:503.27px;font-size:6.3px;line-height:6.3px;color:#e0e0e0;transform:scaleX(0.8678);transform-origin:0 0;">OK</div><div class="a" style="left:643.1px;top:500px;width:44.7px;height:12.3px;border:1px solid #c8c8c8;border-radius:6.2px;box-sizing:border-box;"></div><div class="a t" style="left:656.50px;top:503.27px;font-size:6.3px;line-height:6.3px;color:#e0e0e0;transform:scaleX(0.8816);transform-origin:0 0;">Cancel</div></body></html>
